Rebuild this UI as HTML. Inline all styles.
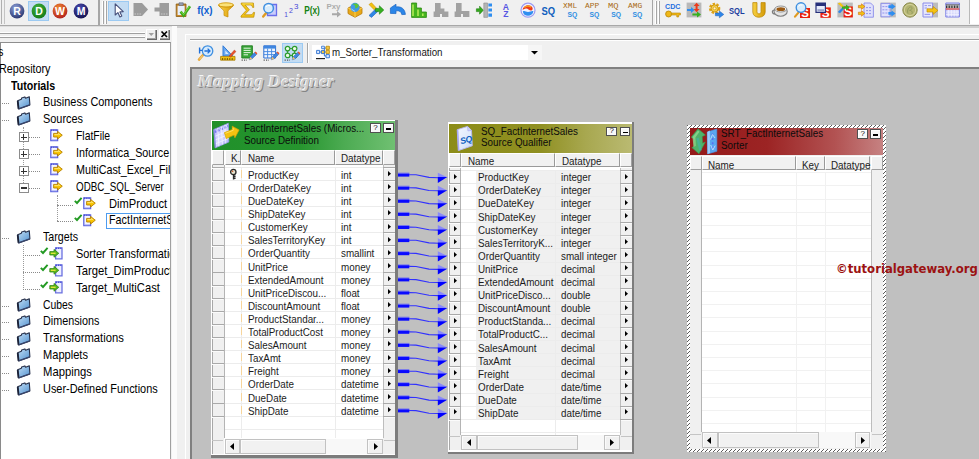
<!DOCTYPE html>
<html><head><meta charset="utf-8"><title>Mapping Designer</title><style>
html,body{margin:0;padding:0}
body{width:979px;height:459px;overflow:hidden;background:#f0f0f0;position:relative;font-family:"Liberation Sans",sans-serif;font-size:12px;color:#000}
.a{position:absolute}
.t{position:absolute;white-space:nowrap;line-height:1}
.tree{font-size:12.8px;color:#000}
.tb{font-size:11px;color:#1a1a1a}
svg{position:absolute;overflow:visible}
</style></head><body>
<div class="a" style="left:0px;top:0px;width:970px;height:24px;background:#f0f0f0;"></div>
<div class="a" style="left:970px;top:0px;width:9px;height:24px;background:#ffffff;"></div>
<div class="a" style="left:969px;top:0px;width:1px;height:24px;background:#b9b9b9;"></div>
<div class="a" style="left:0px;top:24.6px;width:979px;height:1.2px;background:#a8a8a8;"></div>
<div class="a" style="left:0px;top:25.8px;width:979px;height:1.2px;background:#dedede;"></div>
<div class="a" style="left:0px;top:27px;width:172px;height:432px;background:#f0f0f0;"></div>
<div class="a" style="left:0px;top:32.4px;width:145px;height:1px;background:#ffffff;"></div>
<div class="a" style="left:0px;top:33.4px;width:145px;height:1px;background:#a0a0a0;"></div>
<div class="a" style="left:0px;top:36.3px;width:145px;height:1px;background:#ffffff;"></div>
<div class="a" style="left:0px;top:37.3px;width:145px;height:1px;background:#a0a0a0;"></div>
<div class="a" style="left:146px;top:29px;width:11px;height:11px;background:#f0f0f0;box-shadow:inset 1px 1px 0 #fff, inset -1px -1px 0 #696969, inset -2px -2px 0 #a0a0a0;"></div>
<div class="a" style="left:159px;top:29px;width:11px;height:11px;background:#f0f0f0;box-shadow:inset 1px 1px 0 #fff, inset -1px -1px 0 #696969, inset -2px -2px 0 #a0a0a0;"></div>
<svg style="left:146px;top:29px" width="11" height="11"><path d="M2.5 4 L8 4 L5.25 7 Z" fill="#a0a0a0"/></svg>
<svg style="left:159px;top:29px" width="11" height="11"><path d="M2.5 2.5 L8 8 M8 2.5 L2.5 8" stroke="#000" stroke-width="1.7"/></svg>
<div class="a" style="left:0px;top:42.3px;width:171px;height:417px;background:#ffffff;border-top:1.5px solid #8e8e8e;border-right:1px solid #a0a0a0;border-left:1.2px solid #8a8a8a;box-sizing:border-box;"></div>
<div class="a" style="left:172px;top:26.3px;width:5.4px;height:433px;background:#fbfbfb;"></div>
<div class="a" style="left:177.4px;top:25.8px;width:802px;height:1.8px;background:#cecece;"></div>
<div class="a" style="left:177.4px;top:27.8px;width:802px;height:432px;background:#f0f0f0;"></div>
<div class="a" style="left:185px;top:34.2px;width:794px;height:0.9px;background:#ffffff;"></div>
<div class="a" style="left:184.9px;top:34.2px;width:0.8px;height:425px;background:#ffffff;"></div>
<div class="a" style="left:189.6px;top:38.8px;width:790px;height:1px;background:#a0a0a0;"></div>
<div class="a" style="left:189.6px;top:39.8px;width:790px;height:1px;background:#ffffff;"></div>
<div class="a" style="left:189.7px;top:66.8px;width:790px;height:393px;background:#c0c0c0;border-top:2.1px solid #808080;border-left:2.1px solid #808080;box-sizing:border-box;"></div>
<div class="a" style="left:1px;top:0px;width:1px;height:24px;background:#b0b0b0;"></div>
<div class="a" style="left:4px;top:0px;width:1px;height:24px;background:#c4c4c4;"></div>
<div class="a" style="left:28.2px;top:0.7px;width:21.2px;height:20px;background:#c3dcf3;box-sizing:border-box;border:1px solid #9ccaf2;"></div>
<svg style="left:8.5px;top:2.7px" width="16" height="16" viewBox="0 0 16 16"><defs><radialGradient id="bR" cx="0.4" cy="0.3" r="0.75"><stop offset="0" stop-color="#8ea0d8"/><stop offset="1" stop-color="#27346e"/></radialGradient></defs><circle cx="8" cy="8" r="7.4" fill="url(#bR)"/><text x="8" y="11.7" text-anchor="middle" font-family="Liberation Sans, sans-serif" font-weight="bold" font-size="10.5" fill="#fff">R</text></svg>
<svg style="left:30.6px;top:2.9px" width="16" height="16" viewBox="0 0 16 16"><defs><radialGradient id="bD" cx="0.4" cy="0.3" r="0.75"><stop offset="0" stop-color="#3fae3f"/><stop offset="1" stop-color="#157a15"/></radialGradient></defs><circle cx="8" cy="8" r="7.4" fill="url(#bD)"/><text x="8" y="11.7" text-anchor="middle" font-family="Liberation Sans, sans-serif" font-weight="bold" font-size="10.5" fill="#fff">D</text></svg>
<svg style="left:51.8px;top:2.7px" width="16" height="16" viewBox="0 0 16 16"><defs><radialGradient id="bW" cx="0.4" cy="0.3" r="0.75"><stop offset="0" stop-color="#f08a30"/><stop offset="1" stop-color="#b01c1c"/></radialGradient></defs><circle cx="8" cy="8" r="7.4" fill="url(#bW)"/><text x="8" y="11.7" text-anchor="middle" font-family="Liberation Sans, sans-serif" font-weight="bold" font-size="10.5" fill="#fff">W</text></svg>
<svg style="left:73.3px;top:2.7px" width="16" height="16" viewBox="0 0 16 16"><defs><radialGradient id="bM" cx="0.4" cy="0.3" r="0.75"><stop offset="0" stop-color="#4a4ab0"/><stop offset="1" stop-color="#12124e"/></radialGradient></defs><circle cx="8" cy="8" r="7.4" fill="url(#bM)"/><text x="8" y="11.7" text-anchor="middle" font-family="Liberation Sans, sans-serif" font-weight="bold" font-size="10.5" fill="#fff">M</text></svg>
<div class="a" style="left:98.4px;top:0px;width:1.2px;height:24.5px;background:#a6a6a6;"></div>
<div class="a" style="left:101.7px;top:1px;width:1px;height:22.5px;background:#ffffff;"></div>
<div class="a" style="left:102.7px;top:1px;width:1px;height:22.5px;background:#a6a6a6;"></div>
<div class="a" style="left:105.3px;top:1px;width:1px;height:22.5px;background:#ffffff;"></div>
<div class="a" style="left:106.3px;top:1px;width:1px;height:22.5px;background:#a6a6a6;"></div>
<div class="a" style="left:108.3px;top:0.7px;width:21.2px;height:20px;background:#c3dcf3;box-sizing:border-box;border:1px solid #9ccaf2;"></div>
<svg style="left:111px;top:2.4px" width="16" height="16" viewBox="0 0 16 16"><path d="M4.2 1.8 L4.2 13 L6.9 10.6 L8.9 14.9 L10.8 14 L8.9 9.9 L12.3 9.6 Z" fill="#fff" stroke="#47507a" stroke-width="1.1" stroke-linejoin="round"/></svg>
<svg style="left:133.45px;top:2.4px" width="16" height="16" viewBox="0 0 16 16"><path d="M0.5 1 H9 L15 7.5 L9 14 H0.5 Z" fill="#9c9c9c"/><path d="M1.5 12 H8" stroke="#c8c8c8" stroke-width="1" stroke-dasharray="1.5 1"/></svg>
<svg style="left:153.9px;top:2.4px" width="16" height="16" viewBox="0 0 16 16"><path d="M5.5 1 H15 V14 H5.5 V9.5 H0.5 V5.5 H5.5 Z" fill="#9c9c9c"/><path d="M7 12 H14" stroke="#c8c8c8" stroke-width="1" stroke-dasharray="1.5 1"/></svg>
<svg style="left:175.35px;top:2.4px" width="16" height="16" viewBox="0 0 16 16"><path d="M1.2 2 H11 V14.5 H1.2 Z" fill="#c88a2a" stroke="#8a5a10" stroke-width="0.8"/><path d="M2.6 3.8 H9.6 V13 H2.6 Z" fill="#e6eefc"/><path d="M4 0.8 H8.2 V3.4 H4 Z" fill="#9aa0b4" stroke="#5a6074" stroke-width="0.6"/><path d="M5.6 9.6 L8.6 13.6 L15 4.2" fill="none" stroke="#3caa1c" stroke-width="2.6"/><path d="M6 9.4 L8.6 12.6 L14.4 4.4" fill="none" stroke="#8fe04a" stroke-width="0.8"/></svg>
<svg style="left:196.8px;top:2.4px" width="16" height="16" viewBox="0 0 16 16"><text x="0.2" y="12" font-family="Liberation Sans, sans-serif" font-weight="bold" font-size="11.5" fill="#0f5fd0" textLength="15.4" lengthAdjust="spacingAndGlyphs">f(x)</text></svg>
<svg style="left:218.25px;top:2.4px" width="16" height="16" viewBox="0 0 16 16"><defs><linearGradient id="fun" x1="0" x2="1"><stop offset="0" stop-color="#f9d24a"/><stop offset="1" stop-color="#d89a06"/></linearGradient></defs><ellipse cx="8" cy="3" rx="7.6" ry="2.2" fill="#fbe27a" stroke="#d49a08" stroke-width="0.9"/><path d="M0.6 3.6 C3 6.5 6 8 6 9.5 V13.5 L10 15 V9.5 C10 8 13 6.5 15.4 3.6 C12 5.6 4 5.6 0.6 3.6 Z" fill="url(#fun)" stroke="#c88c04" stroke-width="0.7"/></svg>
<svg style="left:239.7px;top:2.4px" width="16" height="16" viewBox="0 0 16 16"><path d="M1.2 1 H13.4 L13.8 5.4 H12.6 C12.2 3.6 11.2 3 9.4 3 H5.2 L9.4 7.8 L4.6 12.8 H10 C12 12.8 12.8 12 13.4 10.4 H14.6 L13.8 15.2 H1 V14 L6.4 8.2 L1.2 2.2 Z" fill="#f2c418" stroke="#b88a04" stroke-width="0.7" stroke-linejoin="round"/><path d="M2.4 1.9 H12.6" stroke="#fdea70" stroke-width="0.8"/></svg>
<svg style="left:261.15px;top:2.4px" width="16" height="16" viewBox="0 0 16 16"><path d="M6.5 2.5 H15.5 V13.5 H6.5 Z" fill="#c9cdfb" stroke="#6a6eea" stroke-width="1.3"/><path d="M2.2 14.6 L5.6 10.4" stroke="#e09a20" stroke-width="2.4" stroke-linecap="round"/><circle cx="7.6" cy="6.2" r="4.8" fill="#d8ecfc" stroke="#3f8fe0" stroke-width="1.5"/><path d="M5.2 5 A3 3 0 0 1 9 3.6" stroke="#fff" stroke-width="1" fill="none"/></svg>
<svg style="left:282.6px;top:2.4px" width="16" height="16" viewBox="0 0 16 16"><text x="1.2" y="14.6" font-family="Liberation Sans, sans-serif" font-size="6.5" fill="#4848d8">1</text><text x="6" y="10.6" font-family="Liberation Sans, sans-serif" font-size="7" fill="#4848d8">2</text><text x="11" y="7" font-family="Liberation Sans, sans-serif" font-size="8" fill="#4848d8">3</text></svg>
<svg style="left:304.05px;top:2.4px" width="16" height="16" viewBox="0 0 16 16"><text x="0.2" y="12.4" font-family="Liberation Sans, sans-serif" font-weight="bold" font-size="11" fill="#138213" textLength="15.6" lengthAdjust="spacingAndGlyphs">P(x)</text></svg>
<svg style="left:325.5px;top:2.4px" width="16" height="16" viewBox="0 0 16 16"><text x="0.4" y="7.2" font-family="Liberation Sans, sans-serif" font-weight="bold" font-size="8" fill="#acacac" textLength="14" lengthAdjust="spacingAndGlyphs">Pxy</text><path d="M6 11.3 H11 V9 L15 12.3 L11 15.6 V13.3 H6 Z" fill="#a8a8a8"/></svg>
<svg style="left:346.95px;top:2.4px" width="16" height="16" viewBox="0 0 16 16"><path d="M1 6 L8 2.5 L15 6 V11.5 L8 15.3 L1 11.5 Z" fill="#e8a91a" stroke="#b87806" stroke-width="0.8"/><path d="M1 6 L8 9.6 L15 6 M8 9.6 V15.3" stroke="#fbd65a" stroke-width="0.9" fill="none"/><circle cx="8" cy="5.4" r="4.6" fill="#3f9ae8"/><path d="M5.5 3 C8 2 9 5 7.6 6.6 C9.5 6.4 11.5 5 11.8 3.4 C10.5 1.2 7 0.8 5.5 3 Z" fill="#5cc43a"/><path d="M4 6.5 C5 8 7 8.5 8 9.4" stroke="#bfe2ff" stroke-width="0.8" fill="none"/></svg>
<svg style="left:368.4px;top:2.4px" width="16" height="16" viewBox="0 0 16 16"><path d="M1 2.5 L3.5 0.8 L9.5 7.2 L7.4 9 Z" fill="#f2c312" stroke="#c99404" stroke-width="0.6"/><path d="M1 13.5 L3.5 15.4 L9.8 9.4 L7.4 7.2 Z" fill="#2f86e6" stroke="#1d62b8" stroke-width="0.6"/><path d="M7.5 6.4 H11.4 V3.8 L15.8 8 L11.4 12.2 V9.6 H7.5 Z" fill="#36b020" stroke="#1f7e10" stroke-width="0.6"/></svg>
<svg style="left:389.85px;top:2.4px" width="16" height="16" viewBox="0 0 16 16"><path d="M0.4 6 L6 2.2 V5 C11 4 15 7 15.4 12.4 L11.8 12.6 C11.4 9.5 9 8.4 6 8.8 V11.6 L0.4 11.4 Z" fill="#2b86e8" stroke="#1c66c2" stroke-width="0.7" stroke-linejoin="round"/></svg>
<svg style="left:411.3px;top:2.4px" width="16" height="16" viewBox="0 0 16 16"><path d="M0.6 1 H5.6 V6 H10.4 V10 H15.4 V15.4 H0.6 Z" fill="#45b41f" stroke="#2b8a10" stroke-width="0.8"/><path d="M2 2.4 V14 M7 7.4 V14 M11.8 11.4 V14" stroke="#b6ec5a" stroke-width="1.5"/></svg>
<svg style="left:432.75px;top:2.4px" width="16" height="16" viewBox="0 0 16 16"><path d="M2 1 H7.6 V6.6 H11.4 V9.6 H15.4 V15 H9 V12 H7 V15 H0.6 V9.6 H2 Z" fill="#a2a2a2"/></svg>
<svg style="left:454.2px;top:2.4px" width="16" height="16" viewBox="0 0 16 16"><path d="M2 1 H7.6 V9 H15.4 V15 H9 V12 H7 V15 H0.6 V9.6 H2 Z" fill="#a2a2a2"/></svg>
<svg style="left:475.65px;top:2.4px" width="16" height="16" viewBox="0 0 16 16"><path d="M0.4 6.8 H3.6 V4.2 L7.4 8.2 L3.6 12.2 V9.6 H0.4 Z" fill="#34aa1c" stroke="#1f7e10" stroke-width="0.6"/><path d="M7.8 1 H11.6 V15.4 H7.8 Z" fill="#b4b4b4" stroke="#8c8c8c" stroke-width="0.6"/><path d="M12.4 1.4 H16 V4.6 H12.4 Z M12.4 6.4 H16 V9.6 H12.4 Z M12.4 11.6 H16 V14.8 H12.4 Z" fill="#2f8ef0"/></svg>
<svg style="left:497.1px;top:2.4px" width="16" height="16" viewBox="0 0 16 16"><text x="8.8" y="7.6" text-anchor="middle" font-family="Liberation Sans, sans-serif" font-weight="bold" font-size="8.6" fill="#5656e2">A</text><text x="8.8" y="15.4" text-anchor="middle" font-family="Liberation Sans, sans-serif" font-weight="bold" font-size="8.6" fill="#5656e2">Z</text></svg>
<svg style="left:519.55px;top:2.4px" width="16" height="16" viewBox="0 0 16 16"><circle cx="8" cy="8.2" r="7" fill="#f2f4ff" stroke="#9a9af2" stroke-width="1.2"/><path d="M2.6 8 C3 3.6 8.6 2 11.6 4.4 C13.4 6 12.8 8.6 10.6 8.6 C8.4 8.4 8.2 6.4 6 6.6 C4.4 6.8 3.4 7.6 2.6 8 Z" fill="#ee3a1a"/><path d="M4.4 5.6 C6 3.8 9.6 3.6 11 5.2" stroke="#f7a21c" stroke-width="1.4" fill="none"/><path d="M2.8 9.4 C4.6 8.2 6 10 8 10 C10 10 11.6 8.8 13.4 9.2 C13 12 10.8 13.8 8 13.8 C5.2 13.8 3.2 12 2.8 9.4 Z" fill="#2f8ef0"/></svg>
<svg style="left:541px;top:2.4px" width="16" height="16" viewBox="0 0 16 16"><text x="0.6" y="13" font-family="Liberation Sans, sans-serif" font-weight="bold" font-size="11.5" fill="#0f5fbe" textLength="13.6" lengthAdjust="spacingAndGlyphs">SQ</text></svg>
<svg style="left:563.45px;top:2.4px" width="16" height="16" viewBox="0 0 16 16"><text x="0" y="6.4" font-family="Liberation Mono, monospace" font-size="6.6" fill="#a86a14" textLength="14.2" lengthAdjust="spacingAndGlyphs">XML</text><text x="4.6" y="14.6" font-family="Liberation Sans, sans-serif" font-weight="bold" font-size="7.6" fill="#2f8fe2" textLength="9.8" lengthAdjust="spacingAndGlyphs">SQ</text></svg>
<svg style="left:584.9px;top:2.4px" width="16" height="16" viewBox="0 0 16 16"><text x="0" y="6.4" font-family="Liberation Mono, monospace" font-size="6.6" fill="#a86a14" textLength="14.2" lengthAdjust="spacingAndGlyphs">APP</text><text x="4.6" y="14.6" font-family="Liberation Sans, sans-serif" font-weight="bold" font-size="7.6" fill="#2f8fe2" textLength="9.8" lengthAdjust="spacingAndGlyphs">SQ</text></svg>
<svg style="left:608.35px;top:2.4px" width="16" height="16" viewBox="0 0 16 16"><text x="0" y="6.4" font-family="Liberation Mono, monospace" font-size="6.6" fill="#a86a14" textLength="10.6" lengthAdjust="spacingAndGlyphs">MQ</text><text x="3.2" y="14.6" font-family="Liberation Sans, sans-serif" font-weight="bold" font-size="7.6" fill="#2f8fe2" textLength="9.8" lengthAdjust="spacingAndGlyphs">SQ</text></svg>
<svg style="left:627.8px;top:2.4px" width="16" height="16" viewBox="0 0 16 16"><text x="0" y="6.4" font-family="Liberation Mono, monospace" font-size="6.6" fill="#a86a14" textLength="14.2" lengthAdjust="spacingAndGlyphs">AMG</text><text x="4.6" y="14.6" font-family="Liberation Sans, sans-serif" font-weight="bold" font-size="7.6" fill="#2f8fe2" textLength="9.8" lengthAdjust="spacingAndGlyphs">SQ</text></svg>
<div class="a" style="left:651.8px;top:0px;width:1.2px;height:24.5px;background:#a6a6a6;"></div>
<div class="a" style="left:654.6px;top:1px;width:1px;height:22.5px;background:#ffffff;"></div>
<div class="a" style="left:655.6px;top:1px;width:1px;height:22.5px;background:#a6a6a6;"></div>
<div class="a" style="left:658.2px;top:1px;width:1px;height:22.5px;background:#ffffff;"></div>
<div class="a" style="left:659.2px;top:1px;width:1px;height:22.5px;background:#a6a6a6;"></div>
<svg style="left:665px;top:2.4px" width="16" height="16" viewBox="0 0 16 16"><text x="0" y="6.8" font-family="Liberation Sans, sans-serif" font-weight="bold" font-size="8" fill="#1f6fe0" textLength="15.4" lengthAdjust="spacingAndGlyphs">CDC</text><circle cx="3.6" cy="12" r="3" fill="#f0b818" stroke="#b88404" stroke-width="0.8"/><path d="M6.4 11 H15.4 V13 H13.6 V15 H11.8 V13 H6.4 Z" fill="#f0b818" stroke="#b88404" stroke-width="0.6"/></svg>
<svg style="left:686.45px;top:2.4px" width="16" height="16" viewBox="0 0 16 16"><path d="M0.6 0.6 H15.4 V15.4 H0.6 Z" fill="#b9b9b9"/><path d="M1 7 H5 V5 L8.6 8 L5 11 V9 H1 Z" fill="#2f8ef0"/><path d="M10.6 0.8 L13.6 4 H11.6 V7 H13.6 L10.6 10.2 L7.6 7 H9.6 V4 H7.6 Z" fill="#ee3a1a"/><path d="M6.4 11.4 H11 V9.6 L15 12.6 L11 15.4 V13.6 H6.4 Z" fill="#36b020"/></svg>
<svg style="left:707.9px;top:2.4px" width="16" height="16" viewBox="0 0 16 16"><circle cx="6.6" cy="6.4" r="4.2" fill="none" stroke="#e0a416" stroke-width="3" stroke-dasharray="2.2 1.3"/><circle cx="6.6" cy="6.4" r="3.6" fill="#f6cf4a" stroke="#c48c08" stroke-width="0.8"/><circle cx="6.6" cy="6.4" r="1.4" fill="#fff6d0" stroke="#c48c08" stroke-width="0.6"/><path d="M7.4 11 H11.4 V9 L15.8 12.4 L11.4 15.8 V13.8 H7.4 Z" fill="#2f86e8" stroke="#1a5cb6" stroke-width="0.5"/></svg>
<svg style="left:729.35px;top:2.4px" width="16" height="16" viewBox="0 0 16 16"><text x="0" y="11.8" font-family="Liberation Sans, sans-serif" font-weight="bold" font-size="8.6" fill="#1b3d9e" textLength="15.6" lengthAdjust="spacingAndGlyphs">SQL</text></svg>
<svg style="left:751.8px;top:2.4px" width="16" height="16" viewBox="0 0 16 16"><defs><linearGradient id="ug" x1="0" x2="1"><stop offset="0" stop-color="#f7d040"/><stop offset="1" stop-color="#d49a08"/></linearGradient></defs><path d="M0.8 0.6 H5 V9.6 C5 12.6 9 12.6 9 9.6 V0.6 H13.2 V10 C13.2 17 0.8 17 0.8 10 Z" fill="url(#ug)" stroke="#b88404" stroke-width="0.7"/></svg>
<svg style="left:772.25px;top:2.4px" width="16" height="16" viewBox="0 0 16 16"><ellipse cx="8.6" cy="9.4" rx="6.6" ry="4.8" fill="#e4e4e4" stroke="#7e7e7e" stroke-width="1.1"/><ellipse cx="8.8" cy="7" rx="6" ry="3" fill="#f8f8f8" stroke="#8a8a8a" stroke-width="0.9"/><ellipse cx="8.8" cy="7.2" rx="4.4" ry="1.9" fill="#9a5a14"/><path d="M2.4 8 C-0.4 8 -0.4 12 3 12" fill="none" stroke="#7e7e7e" stroke-width="1.2"/></svg>
<svg style="left:793.7px;top:2.4px" width="16" height="16" viewBox="0 0 16 16"><path d="M6 6 H16 V16 H6 Z" fill="#e8200e"/><text x="11.0" y="14.9" text-anchor="middle" font-family="Liberation Sans, sans-serif" font-weight="bold" font-size="11.4" fill="#fff">S</text><path d="M1 14.6 L4.4 10.6" stroke="#e09a20" stroke-width="2.2" stroke-linecap="round"/><circle cx="7" cy="5.6" r="4.8" fill="#d8ecfc" stroke="#3f8fe0" stroke-width="1.4"/><path d="M4.6 4.6 A3 3 0 0 1 8.4 3" stroke="#fff" stroke-width="1" fill="none"/></svg>
<svg style="left:815.15px;top:2.4px" width="16" height="16" viewBox="0 0 16 16"><path d="M5.4 5.4 H15.8 V15.8 H5.4 Z" fill="#e8200e"/><text x="10.600000000000001" y="14.700000000000001" text-anchor="middle" font-family="Liberation Sans, sans-serif" font-weight="bold" font-size="11.8" fill="#fff">S</text><path d="M1 1 H10.4 V10.4 H1 Z" fill="#e6ebfa" stroke="#27307a" stroke-width="1.2"/><path d="M1 1 H10.4 V4 H1 Z" fill="#27307a"/><path d="M2.4 7.2 H9 V9.4 H2.4 Z" fill="#9aa2c8"/></svg>
<svg style="left:836.6px;top:2.4px" width="16" height="16" viewBox="0 0 16 16"><path d="M0.4 0.6 H15.8 V15.4 H0.4 Z" fill="#bcbcbc"/><path d="M6.6 4.4 H15.799999999999999 V15.4 H6.6 Z" fill="#e8200e"/><text x="11.2" y="14.3" text-anchor="middle" font-family="Liberation Sans, sans-serif" font-weight="bold" font-size="12.4" fill="#fff">S</text><path d="M0.8 1.6 L3 0.6 L7 4.2 L5.4 5.8 Z" fill="#f2c312"/><path d="M0.8 10 L3 11.2 L7 7 L5.4 5.4 Z" fill="#2f86e6"/><path d="M5 4.4 H9 V2.4 L12.8 5.6 L9 8.8 V6.8 H5 Z" fill="#36b020"/></svg>
<svg style="left:858.05px;top:2.4px" width="16" height="16" viewBox="0 0 16 16"><path d="M6 1 H12.6 L15.4 3.8 V15.2 H6 Z" fill="#dfe0fc" stroke="#8a8cea" stroke-width="0.9"/><path d="M8 5.6 H13.4 M8 8.6 H13.4 M8 11.6 H13.4" stroke="#8a8cea" stroke-width="0.9" stroke-dasharray="2 1"/><path d="M0.4 3.4 H3.4 V1.8 L7 4.6 L3.4 7.4 V5.8 H0.4 Z M0.4 10.2 H3.4 V8.6 L7 11.4 L3.4 14.2 V12.6 H0.4 Z" fill="#f2c312" stroke="#d06a10" stroke-width="0.6"/></svg>
<svg style="left:879.5px;top:2.4px" width="16" height="16" viewBox="0 0 16 16"><path d="M0.4 0.6 H15.8 V15.4 H0.4 Z" fill="#bcbcbc"/><path d="M1 1.4 H10 V14.8 H1 Z" fill="#dfe0fc" stroke="#8a8cea" stroke-width="0.9"/><path d="M2.4 4.6 H8.6 M2.4 7.8 H8.6 M2.4 11 H8.6" stroke="#8a8cea" stroke-width="0.9" stroke-dasharray="2 1"/><path d="M8.4 3.2 H11.4 V1.4 L15.6 4.6 L11.4 7.8 V6 H8.4 Z M8.4 10 H11.4 V8.2 L15.6 11.4 L11.4 14.6 V12.8 H8.4 Z" fill="#2f8ef0"/></svg>
<svg style="left:901.95px;top:2.4px" width="16" height="16" viewBox="0 0 16 16"><circle cx="8" cy="8" r="7.2" fill="#b4b472" stroke="#8c8c50" stroke-width="1"/><circle cx="8" cy="8" r="5.6" fill="none" stroke="#d6d6a0" stroke-width="0.9"/><path d="M6 11.6 C4.6 8 7 4.4 9.4 5 C11 5.6 9.6 8 7.6 8.4 C10 8.4 11 10.4 9.6 12" fill="none" stroke="#8e9a5c" stroke-width="0.9"/></svg>
<svg style="left:922.4px;top:2.4px" width="16" height="16" viewBox="0 0 16 16"><path d="M10 0.6 H16 V15.4 H10 Z" fill="#bcbcbc"/><path d="M1 1 H10.6 V15 H1 Z" fill="#e6e7fd" stroke="#8a8cea" stroke-width="1"/><path d="M2.6 3.6 H5 M6 3.6 H9 M2.6 6 H5 M2.6 12.4 H8" stroke="#8a8cea" stroke-width="0.9"/><path d="M5 6.8 H11 V4.4 L16 8.4 L11 12.4 V10 H5 Z" fill="#f5c211" stroke="#c28c04" stroke-width="0.7"/></svg>
<svg style="left:944.85px;top:2.4px" width="16" height="16" viewBox="0 0 16 16"><path d="M0.8 1 H14.4 V15 H0.8 Z" fill="#d4d6fb" stroke="#7c80e4" stroke-width="1"/><path d="M0.8 3 H14.4 V6.4 H0.8 Z" fill="#e8e8e8"/><path d="M1 4.7 H14.2" stroke="#222" stroke-width="2.6" stroke-dasharray="0.9 0.7"/><path d="M0.8 2.8 H14.4" stroke="#444" stroke-width="0.8"/><path d="M0.8 7 H14.4" stroke="#d8281c" stroke-width="1.1"/><path d="M3.6 8 V14.6 M6.4 8 V14.6 M9.2 8 V14.6 M12 8 V14.6 M1 10 H14 M1 12.4 H14" stroke="#f2f3ff" stroke-width="0.8"/></svg>
<div class="a" style="left:0;top:44px;width:170px;height:415px;overflow:hidden"><div class="a" style="left:0;top:-44px;width:300px;height:459px"><div class="t tree" style="left:-2.5px;top:45.8px;transform:scaleX(0.84);transform-origin:0 0;">s</div>
<div class="t tree" style="left:-1px;top:62.6px;transform:scaleX(0.842);transform-origin:0 0;">Repository</div>
<div class="t tree" style="left:10.5px;top:79.5px;font-weight:bold;transform:scaleX(0.832);transform-origin:0 0;">Tutorials</div>
<div class="a" style="left:0px;top:103.4px;width:9px;height:0;border-top:1px dotted #8a8a8a"></div>
<svg style="left:16px;top:95.6px" width="15" height="14" viewBox="0 0 15 14"><defs><linearGradient id="fg3" x1="0" y1="0" x2="1" y2="1"><stop offset="0" stop-color="#c4e0f6"/><stop offset="1" stop-color="#4f8fce"/></linearGradient></defs><path d="M1.6 4.8 L5.4 3.2 L5.6 1.9 L8.8 0.9 L9.6 2.2 L13.3 0.7 L13.9 8.9 L2.5 13 Z" fill="url(#fg3)" stroke="#27304a" stroke-width="1.1" stroke-linejoin="round"/><path d="M1.7 4.8 L2.6 12.8" stroke="#1b2238" stroke-width="1.8"/><path d="M2.7 12.9 L13.8 8.9" stroke="#39456a" stroke-width="1.3"/></svg>
<div class="t tree" style="left:43px;top:96.4px;transform:scaleX(0.854);transform-origin:0 0;">Business Components</div>
<div class="a" style="left:0px;top:120.2px;width:9px;height:0;border-top:1px dotted #8a8a8a"></div>
<svg style="left:16px;top:112.4px" width="15" height="14" viewBox="0 0 15 14"><defs><linearGradient id="fg4" x1="0" y1="0" x2="1" y2="1"><stop offset="0" stop-color="#c4e0f6"/><stop offset="1" stop-color="#4f8fce"/></linearGradient></defs><path d="M1.6 4.8 L5.4 3.2 L5.6 1.9 L8.8 0.9 L9.6 2.2 L13.3 0.7 L13.9 8.9 L2.5 13 Z" fill="url(#fg4)" stroke="#27304a" stroke-width="1.1" stroke-linejoin="round"/><path d="M1.7 4.8 L2.6 12.8" stroke="#1b2238" stroke-width="1.8"/><path d="M2.7 12.9 L13.8 8.9" stroke="#39456a" stroke-width="1.3"/></svg>
<div class="t tree" style="left:43px;top:113.2px;transform:scaleX(0.852);transform-origin:0 0;">Sources</div>
<div class="a" style="left:0px;top:238.2px;width:9px;height:0;border-top:1px dotted #8a8a8a"></div>
<svg style="left:16px;top:230.4px" width="15" height="14" viewBox="0 0 15 14"><defs><linearGradient id="fg11" x1="0" y1="0" x2="1" y2="1"><stop offset="0" stop-color="#c4e0f6"/><stop offset="1" stop-color="#4f8fce"/></linearGradient></defs><path d="M1.6 4.8 L5.4 3.2 L5.6 1.9 L8.8 0.9 L9.6 2.2 L13.3 0.7 L13.9 8.9 L2.5 13 Z" fill="url(#fg11)" stroke="#27304a" stroke-width="1.1" stroke-linejoin="round"/><path d="M1.7 4.8 L2.6 12.8" stroke="#1b2238" stroke-width="1.8"/><path d="M2.7 12.9 L13.8 8.9" stroke="#39456a" stroke-width="1.3"/></svg>
<div class="t tree" style="left:43px;top:231.2px;transform:scaleX(0.834);transform-origin:0 0;">Targets</div>
<div class="a" style="left:0px;top:305.6px;width:9px;height:0;border-top:1px dotted #8a8a8a"></div>
<svg style="left:16px;top:297.8px" width="15" height="14" viewBox="0 0 15 14"><defs><linearGradient id="fg15" x1="0" y1="0" x2="1" y2="1"><stop offset="0" stop-color="#c4e0f6"/><stop offset="1" stop-color="#4f8fce"/></linearGradient></defs><path d="M1.6 4.8 L5.4 3.2 L5.6 1.9 L8.8 0.9 L9.6 2.2 L13.3 0.7 L13.9 8.9 L2.5 13 Z" fill="url(#fg15)" stroke="#27304a" stroke-width="1.1" stroke-linejoin="round"/><path d="M1.7 4.8 L2.6 12.8" stroke="#1b2238" stroke-width="1.8"/><path d="M2.7 12.9 L13.8 8.9" stroke="#39456a" stroke-width="1.3"/></svg>
<div class="t tree" style="left:43px;top:298.6px;transform:scaleX(0.811);transform-origin:0 0;">Cubes</div>
<div class="a" style="left:0px;top:322.4px;width:9px;height:0;border-top:1px dotted #8a8a8a"></div>
<svg style="left:16px;top:314.6px" width="15" height="14" viewBox="0 0 15 14"><defs><linearGradient id="fg16" x1="0" y1="0" x2="1" y2="1"><stop offset="0" stop-color="#c4e0f6"/><stop offset="1" stop-color="#4f8fce"/></linearGradient></defs><path d="M1.6 4.8 L5.4 3.2 L5.6 1.9 L8.8 0.9 L9.6 2.2 L13.3 0.7 L13.9 8.9 L2.5 13 Z" fill="url(#fg16)" stroke="#27304a" stroke-width="1.1" stroke-linejoin="round"/><path d="M1.7 4.8 L2.6 12.8" stroke="#1b2238" stroke-width="1.8"/><path d="M2.7 12.9 L13.8 8.9" stroke="#39456a" stroke-width="1.3"/></svg>
<div class="t tree" style="left:43px;top:315.4px;transform:scaleX(0.843);transform-origin:0 0;">Dimensions</div>
<div class="a" style="left:0px;top:339.3px;width:9px;height:0;border-top:1px dotted #8a8a8a"></div>
<svg style="left:16px;top:331.5px" width="15" height="14" viewBox="0 0 15 14"><defs><linearGradient id="fg17" x1="0" y1="0" x2="1" y2="1"><stop offset="0" stop-color="#c4e0f6"/><stop offset="1" stop-color="#4f8fce"/></linearGradient></defs><path d="M1.6 4.8 L5.4 3.2 L5.6 1.9 L8.8 0.9 L9.6 2.2 L13.3 0.7 L13.9 8.9 L2.5 13 Z" fill="url(#fg17)" stroke="#27304a" stroke-width="1.1" stroke-linejoin="round"/><path d="M1.7 4.8 L2.6 12.8" stroke="#1b2238" stroke-width="1.8"/><path d="M2.7 12.9 L13.8 8.9" stroke="#39456a" stroke-width="1.3"/></svg>
<div class="t tree" style="left:43px;top:332.3px;transform:scaleX(0.878);transform-origin:0 0;">Transformations</div>
<div class="a" style="left:0px;top:356.1px;width:9px;height:0;border-top:1px dotted #8a8a8a"></div>
<svg style="left:16px;top:348.3px" width="15" height="14" viewBox="0 0 15 14"><defs><linearGradient id="fg18" x1="0" y1="0" x2="1" y2="1"><stop offset="0" stop-color="#c4e0f6"/><stop offset="1" stop-color="#4f8fce"/></linearGradient></defs><path d="M1.6 4.8 L5.4 3.2 L5.6 1.9 L8.8 0.9 L9.6 2.2 L13.3 0.7 L13.9 8.9 L2.5 13 Z" fill="url(#fg18)" stroke="#27304a" stroke-width="1.1" stroke-linejoin="round"/><path d="M1.7 4.8 L2.6 12.8" stroke="#1b2238" stroke-width="1.8"/><path d="M2.7 12.9 L13.8 8.9" stroke="#39456a" stroke-width="1.3"/></svg>
<div class="t tree" style="left:43px;top:349.1px;transform:scaleX(0.865);transform-origin:0 0;">Mapplets</div>
<div class="a" style="left:0px;top:373.0px;width:9px;height:0;border-top:1px dotted #8a8a8a"></div>
<svg style="left:16px;top:365.2px" width="15" height="14" viewBox="0 0 15 14"><defs><linearGradient id="fg19" x1="0" y1="0" x2="1" y2="1"><stop offset="0" stop-color="#c4e0f6"/><stop offset="1" stop-color="#4f8fce"/></linearGradient></defs><path d="M1.6 4.8 L5.4 3.2 L5.6 1.9 L8.8 0.9 L9.6 2.2 L13.3 0.7 L13.9 8.9 L2.5 13 Z" fill="url(#fg19)" stroke="#27304a" stroke-width="1.1" stroke-linejoin="round"/><path d="M1.7 4.8 L2.6 12.8" stroke="#1b2238" stroke-width="1.8"/><path d="M2.7 12.9 L13.8 8.9" stroke="#39456a" stroke-width="1.3"/></svg>
<div class="t tree" style="left:43px;top:366.0px;transform:scaleX(0.881);transform-origin:0 0;">Mappings</div>
<div class="a" style="left:0px;top:389.8px;width:9px;height:0;border-top:1px dotted #8a8a8a"></div>
<svg style="left:16px;top:382.0px" width="15" height="14" viewBox="0 0 15 14"><defs><linearGradient id="fg20" x1="0" y1="0" x2="1" y2="1"><stop offset="0" stop-color="#c4e0f6"/><stop offset="1" stop-color="#4f8fce"/></linearGradient></defs><path d="M1.6 4.8 L5.4 3.2 L5.6 1.9 L8.8 0.9 L9.6 2.2 L13.3 0.7 L13.9 8.9 L2.5 13 Z" fill="url(#fg20)" stroke="#27304a" stroke-width="1.1" stroke-linejoin="round"/><path d="M1.7 4.8 L2.6 12.8" stroke="#1b2238" stroke-width="1.8"/><path d="M2.7 12.9 L13.8 8.9" stroke="#39456a" stroke-width="1.3"/></svg>
<div class="t tree" style="left:43px;top:382.8px;transform:scaleX(0.853);transform-origin:0 0;">User-Defined Functions</div>
<div class="a" style="left:23px;top:127.4px;width:0;height:55.4px;border-left:1px dotted #9a9a9a"></div>
<div class="a" style="left:28px;top:137.1px;width:12px;height:0;border-top:1px dotted #8a8a8a"></div>
<div class="a" style="left:18.5px;top:132.4px;width:10px;height:10px;box-sizing:border-box;border:1px solid #8c8c8c;background:#fff"></div>
<div class="a" style="left:20.5px;top:136.8px;width:6px;height:1.4px;background:#333"></div>
<div class="a" style="left:22.8px;top:134.4px;width:1.4px;height:6px;background:#333"></div>
<svg style="left:50px;top:129.4px" width="13" height="13" viewBox="0 0 13 13"><path d="M0.8 0.8 H7.6 V11.6 H0.8 Z" fill="#f4f5ff" stroke="#5f66e0" stroke-width="1.3"/><path d="M1 1.2 H7.4" stroke="#4a50d8" stroke-width="1.6" stroke-dasharray="1.3 0.9"/><path d="M1.5 11 H7" stroke="#8d93ee" stroke-width="1"/><path d="M3.6 4.4 H7.6 V2.4 L12.3 6.2 L7.6 10 V8 H3.6 Z" fill="#f8c400" stroke="#b98200" stroke-width="0.9" stroke-linejoin="round"/><path d="M4.4 5.6 H8.4 V4.6 L10.3 6.1" stroke="#ffe97a" stroke-width="0.9" fill="none"/></svg>
<div class="t tree" style="left:76px;top:130.1px;transform:scaleX(0.813);transform-origin:0 0;">FlatFile</div>
<div class="a" style="left:28px;top:153.9px;width:12px;height:0;border-top:1px dotted #8a8a8a"></div>
<div class="a" style="left:18.5px;top:149.3px;width:10px;height:10px;box-sizing:border-box;border:1px solid #8c8c8c;background:#fff"></div>
<div class="a" style="left:20.5px;top:153.6px;width:6px;height:1.4px;background:#333"></div>
<div class="a" style="left:22.8px;top:151.3px;width:1.4px;height:6px;background:#333"></div>
<svg style="left:50px;top:146.3px" width="13" height="13" viewBox="0 0 13 13"><path d="M0.8 0.8 H7.6 V11.6 H0.8 Z" fill="#f4f5ff" stroke="#5f66e0" stroke-width="1.3"/><path d="M1 1.2 H7.4" stroke="#4a50d8" stroke-width="1.6" stroke-dasharray="1.3 0.9"/><path d="M1.5 11 H7" stroke="#8d93ee" stroke-width="1"/><path d="M3.6 4.4 H7.6 V2.4 L12.3 6.2 L7.6 10 V8 H3.6 Z" fill="#f8c400" stroke="#b98200" stroke-width="0.9" stroke-linejoin="round"/><path d="M4.4 5.6 H8.4 V4.6 L10.3 6.1" stroke="#ffe97a" stroke-width="0.9" fill="none"/></svg>
<div class="t tree" style="left:76px;top:146.9px;transform:scaleX(0.84);transform-origin:0 0;">Informatica_Source</div>
<div class="a" style="left:28px;top:170.8px;width:12px;height:0;border-top:1px dotted #8a8a8a"></div>
<div class="a" style="left:18.5px;top:166.2px;width:10px;height:10px;box-sizing:border-box;border:1px solid #8c8c8c;background:#fff"></div>
<div class="a" style="left:20.5px;top:170.5px;width:6px;height:1.4px;background:#333"></div>
<div class="a" style="left:22.8px;top:168.2px;width:1.4px;height:6px;background:#333"></div>
<svg style="left:50px;top:163.2px" width="13" height="13" viewBox="0 0 13 13"><path d="M0.8 0.8 H7.6 V11.6 H0.8 Z" fill="#f4f5ff" stroke="#5f66e0" stroke-width="1.3"/><path d="M1 1.2 H7.4" stroke="#4a50d8" stroke-width="1.6" stroke-dasharray="1.3 0.9"/><path d="M1.5 11 H7" stroke="#8d93ee" stroke-width="1"/><path d="M3.6 4.4 H7.6 V2.4 L12.3 6.2 L7.6 10 V8 H3.6 Z" fill="#f8c400" stroke="#b98200" stroke-width="0.9" stroke-linejoin="round"/><path d="M4.4 5.6 H8.4 V4.6 L10.3 6.1" stroke="#ffe97a" stroke-width="0.9" fill="none"/></svg>
<div class="t tree" style="left:76px;top:163.8px;transform:scaleX(0.84);transform-origin:0 0;">MultiCast_Excel_File</div>
<div class="a" style="left:28px;top:187.6px;width:12px;height:0;border-top:1px dotted #8a8a8a"></div>
<div class="a" style="left:18.5px;top:183.0px;width:10px;height:10px;box-sizing:border-box;border:1px solid #8c8c8c;background:#fff"></div>
<div class="a" style="left:20.5px;top:187.3px;width:6px;height:1.4px;background:#333"></div>
<svg style="left:50px;top:180.0px" width="13" height="13" viewBox="0 0 13 13"><path d="M0.8 0.8 H7.6 V11.6 H0.8 Z" fill="#f4f5ff" stroke="#5f66e0" stroke-width="1.3"/><path d="M1 1.2 H7.4" stroke="#4a50d8" stroke-width="1.6" stroke-dasharray="1.3 0.9"/><path d="M1.5 11 H7" stroke="#8d93ee" stroke-width="1"/><path d="M3.6 4.4 H7.6 V2.4 L12.3 6.2 L7.6 10 V8 H3.6 Z" fill="#f8c400" stroke="#b98200" stroke-width="0.9" stroke-linejoin="round"/><path d="M4.4 5.6 H8.4 V4.6 L10.3 6.1" stroke="#ffe97a" stroke-width="0.9" fill="none"/></svg>
<div class="t tree" style="left:76px;top:180.6px;transform:scaleX(0.767);transform-origin:0 0;">ODBC_SQL_Server</div>
<div class="a" style="left:56.5px;top:194.8px;width:0;height:26.7px;border-left:1px dotted #9a9a9a"></div>
<div class="a" style="left:57px;top:204.5px;width:16px;height:0;border-top:1px dotted #8a8a8a"></div>
<svg style="left:73.5px;top:196.8px" width="9" height="8" viewBox="0 0 9 8"><path d="M0.8 3.8 L3 6 L7.6 0.8" fill="none" stroke="#239a23" stroke-width="1.9"/></svg>
<svg style="left:83px;top:196.8px" width="13" height="13" viewBox="0 0 13 13"><path d="M0.8 0.8 H7.6 V11.6 H0.8 Z" fill="#f4f5ff" stroke="#5f66e0" stroke-width="1.3"/><path d="M1 1.2 H7.4" stroke="#4a50d8" stroke-width="1.6" stroke-dasharray="1.3 0.9"/><path d="M1.5 11 H7" stroke="#8d93ee" stroke-width="1"/><path d="M3.6 4.4 H7.6 V2.4 L12.3 6.2 L7.6 10 V8 H3.6 Z" fill="#f8c400" stroke="#b98200" stroke-width="0.9" stroke-linejoin="round"/><path d="M4.4 5.6 H8.4 V4.6 L10.3 6.1" stroke="#ffe97a" stroke-width="0.9" fill="none"/></svg>
<div class="a" style="left:57px;top:221.3px;width:16px;height:0;border-top:1px dotted #8a8a8a"></div>
<svg style="left:73.5px;top:213.7px" width="9" height="8" viewBox="0 0 9 8"><path d="M0.8 3.8 L3 6 L7.6 0.8" fill="none" stroke="#239a23" stroke-width="1.9"/></svg>
<svg style="left:83px;top:213.7px" width="13" height="13" viewBox="0 0 13 13"><path d="M0.8 0.8 H7.6 V11.6 H0.8 Z" fill="#f4f5ff" stroke="#5f66e0" stroke-width="1.3"/><path d="M1 1.2 H7.4" stroke="#4a50d8" stroke-width="1.6" stroke-dasharray="1.3 0.9"/><path d="M1.5 11 H7" stroke="#8d93ee" stroke-width="1"/><path d="M3.6 4.4 H7.6 V2.4 L12.3 6.2 L7.6 10 V8 H3.6 Z" fill="#f8c400" stroke="#b98200" stroke-width="0.9" stroke-linejoin="round"/><path d="M4.4 5.6 H8.4 V4.6 L10.3 6.1" stroke="#ffe97a" stroke-width="0.9" fill="none"/></svg>
<div class="t tree" style="left:109px;top:197.5px;transform:scaleX(0.87);transform-origin:0 0;">DimProduct</div>
<div class="a" style="left:106px;top:212.5px;width:70px;height:16px;box-sizing:border-box;border:1px solid #4d9cf0;background:#fff"></div>
<div class="t tree" style="left:109px;top:214.3px;transform:scaleX(0.84);transform-origin:0 0;">FactInternetSales</div>
<div class="a" style="left:23px;top:245.4px;width:0;height:42.6px;border-left:1px dotted #9a9a9a"></div>
<div class="a" style="left:23px;top:255.0px;width:17px;height:0;border-top:1px dotted #8a8a8a"></div>
<svg style="left:40px;top:247.4px" width="9" height="8" viewBox="0 0 9 8"><path d="M0.8 3.8 L3 6 L7.6 0.8" fill="none" stroke="#239a23" stroke-width="1.9"/></svg>
<svg style="left:49px;top:247.4px" width="15" height="13" viewBox="0 0 15 13"><path d="M6.6 0.8 H13 V11.8 H6.6 Z" fill="#eef0ff" stroke="#6a70e0" stroke-width="1.3"/><path d="M6.8 1.2 H12.8" stroke="#4a50d8" stroke-width="1.6" stroke-dasharray="1.3 0.9"/><path d="M0.8 4.6 H5 V2.4 L9.8 6.3 L5 10.2 V8 H0.8 Z" fill="#5cb41e" stroke="#2f8a12" stroke-width="0.8" stroke-linejoin="round"/><path d="M1.8 6.3 H6.6" stroke="#e6e83a" stroke-width="1.3"/></svg>
<div class="t tree" style="left:76px;top:248.0px;transform:scaleX(0.852);transform-origin:0 0;">Sorter Transformation</div>
<div class="a" style="left:23px;top:271.9px;width:17px;height:0;border-top:1px dotted #8a8a8a"></div>
<svg style="left:40px;top:264.2px" width="9" height="8" viewBox="0 0 9 8"><path d="M0.8 3.8 L3 6 L7.6 0.8" fill="none" stroke="#239a23" stroke-width="1.9"/></svg>
<svg style="left:49px;top:264.2px" width="15" height="13" viewBox="0 0 15 13"><path d="M6.6 0.8 H13 V11.8 H6.6 Z" fill="#eef0ff" stroke="#6a70e0" stroke-width="1.3"/><path d="M6.8 1.2 H12.8" stroke="#4a50d8" stroke-width="1.6" stroke-dasharray="1.3 0.9"/><path d="M0.8 4.6 H5 V2.4 L9.8 6.3 L5 10.2 V8 H0.8 Z" fill="#5cb41e" stroke="#2f8a12" stroke-width="0.8" stroke-linejoin="round"/><path d="M1.8 6.3 H6.6" stroke="#e6e83a" stroke-width="1.3"/></svg>
<div class="t tree" style="left:76px;top:264.9px;transform:scaleX(0.881);transform-origin:0 0;">Target_DimProduct</div>
<div class="a" style="left:23px;top:288.7px;width:17px;height:0;border-top:1px dotted #8a8a8a"></div>
<svg style="left:40px;top:281.1px" width="9" height="8" viewBox="0 0 9 8"><path d="M0.8 3.8 L3 6 L7.6 0.8" fill="none" stroke="#239a23" stroke-width="1.9"/></svg>
<svg style="left:49px;top:281.1px" width="15" height="13" viewBox="0 0 15 13"><path d="M6.6 0.8 H13 V11.8 H6.6 Z" fill="#eef0ff" stroke="#6a70e0" stroke-width="1.3"/><path d="M6.8 1.2 H12.8" stroke="#4a50d8" stroke-width="1.6" stroke-dasharray="1.3 0.9"/><path d="M0.8 4.6 H5 V2.4 L9.8 6.3 L5 10.2 V8 H0.8 Z" fill="#5cb41e" stroke="#2f8a12" stroke-width="0.8" stroke-linejoin="round"/><path d="M1.8 6.3 H6.6" stroke="#e6e83a" stroke-width="1.3"/></svg>
<div class="t tree" style="left:76px;top:281.7px;transform:scaleX(0.873);transform-origin:0 0;">Target_MultiCast</div></div></div>
<svg style="left:198.2px;top:44.6px" width="16" height="16" viewBox="0 0 16 16"><path d="M1 14.6 L5 10" stroke="#e8a83a" stroke-width="2.6" stroke-linecap="round"/><path d="M1.6 14.2 L4.6 10.6" stroke="#fbe2a0" stroke-width="0.8"/><circle cx="9.6" cy="6" r="5.2" fill="#d6ebfd" stroke="#3f8fe0" stroke-width="1.3"/><path d="M6.4 6 H11.6 M9.6 3.6 L12 6 L9.6 8.4" fill="none" stroke="#1f6fd8" stroke-width="1.3"/><path d="M1.6 2.4 V8.4 M1.6 5.4 H4.4" stroke="#1f6fd8" stroke-width="1.4"/></svg>
<svg style="left:219.8px;top:44.6px" width="16" height="16" viewBox="0 0 16 16"><path d="M3 11 V0.8 L12.6 11 Z" fill="#6aa8f0" stroke="#2f7ad8" stroke-width="1"/><path d="M5.4 9 V5.6 L8.6 9 Z" fill="#d9eafc"/><path d="M0.6 11.4 H15 V15.2 H0.6 Z" fill="#f0c010" stroke="#a87c04" stroke-width="0.8"/><path d="M2.6 13 V15 M5 13 V15 M7.4 13 V15 M9.8 13 V15 M12.2 13 V15" stroke="#6a5004" stroke-width="0.9"/><path d="M9 11 L14.4 5 L16 6.6 L10.6 12.2 Z" fill="#e8502a" stroke="#a8341a" stroke-width="0.4"/></svg>
<svg style="left:241.2px;top:44.6px" width="16" height="16" viewBox="0 0 16 16"><path d="M0.8 0.8 H11.4 V13 H0.8 Z" fill="#3aa63a" stroke="#1f7e1f" stroke-width="0.9"/><path d="M2.6 3.2 H9.6 M2.6 5.4 H9.6 M2.6 7.6 H9.6 M2.6 9.8 H7" stroke="#e4f6e0" stroke-width="1"/><path d="M0.6 15.2 H6" stroke="#555" stroke-width="1.2" stroke-dasharray="1.2 1.2"/><path d="M8.2 14.8 L9.2 11.8 L13.6 7.4 L15.6 9.4 L11.2 13.8 Z" fill="#3f86e0" stroke="#2a5fb0" stroke-width="0.5"/><path d="M13.6 7.4 L14.6 6.4 L16.4 8.2 L15.6 9.4 Z" fill="#e8502a"/><path d="M8.2 14.8 L9.2 11.8 L11.2 13.8 Z" fill="#f2c06a"/></svg>
<svg style="left:262.7px;top:44.6px" width="16" height="16" viewBox="0 0 16 16"><path d="M0.8 0.8 H12.6 V13 H0.8 Z" fill="#eef4ff" stroke="#2f6fd0" stroke-width="1"/><path d="M0.8 0.8 H12.6 V3.6 H0.8 Z" fill="#3f86e0"/><path d="M0.8 6.6 H12.6 M0.8 9.6 H12.6 M4.6 3.6 V13 M8.6 3.6 V13" stroke="#3f86e0" stroke-width="0.9"/><path d="M0.6 15.2 H6" stroke="#555" stroke-width="1.2" stroke-dasharray="1.2 1.2"/><path d="M8.2 14.8 L9.2 11.8 L13.6 7.4 L15.6 9.4 L11.2 13.8 Z" fill="#3f86e0" stroke="#2a5fb0" stroke-width="0.5"/><path d="M13.6 7.4 L14.6 6.4 L16.4 8.2 L15.6 9.4 Z" fill="#e8502a"/><path d="M8.2 14.8 L9.2 11.8 L11.2 13.8 Z" fill="#f2c06a"/></svg>
<div class="a" style="left:281.5px;top:42.6px;width:21.4px;height:20.3px;background:#c3dcf3;box-sizing:border-box;border:1px solid #9ccaf2;"></div>
<svg style="left:284.2px;top:44.6px" width="16" height="16" viewBox="0 0 16 16"><path d="M3.6 3.6 H10.6 M3.6 10.4 H10.6 M3.6 3.6 V10.4 M10.6 3.6 V10.4" stroke="#2a9a2a" stroke-width="1"/><g fill="#eafbe6" stroke="#2a9a2a" stroke-width="1.2"><circle cx="3.6" cy="3.6" r="2.3"/><circle cx="10.6" cy="3.6" r="2.3"/><circle cx="3.6" cy="10.4" r="2.3"/><circle cx="10.6" cy="10.4" r="2.3"/></g><path d="M0.6 15.2 H6" stroke="#555" stroke-width="1.2" stroke-dasharray="1.2 1.2"/><path d="M8.2 14.8 L9.2 11.8 L13.6 7.4 L15.6 9.4 L11.2 13.8 Z" fill="#3f86e0" stroke="#2a5fb0" stroke-width="0.5"/><path d="M13.6 7.4 L14.6 6.4 L16.4 8.2 L15.6 9.4 Z" fill="#e8502a"/><path d="M8.2 14.8 L9.2 11.8 L11.2 13.8 Z" fill="#f2c06a"/></svg>
<div class="a" style="left:306.6px;top:43.4px;width:1px;height:20px;background:#a6a6a6;"></div>
<div class="a" style="left:307.6px;top:43.4px;width:1px;height:20px;background:#ffffff;"></div>
<div class="a" style="left:312px;top:44.5px;width:229.7px;height:15.9px;background:#ffffff;"></div>
<div class="a" style="left:527.9px;top:44.5px;width:13.8px;height:15.9px;background:#f6f6f6;"></div>
<svg style="left:530.8px;top:51.2px" width="7" height="4" viewBox="0 0 7 4"><path d="M0 0 H7 L3.5 3.4 Z" fill="#000"/></svg>
<svg style="left:316.3px;top:45.2px" width="14" height="15" viewBox="0 0 14 15"><path d="M0 13.6 H9" stroke="#222" stroke-width="1.2"/><path d="M3 7 H7 M8.4 3 V11 M8.4 3 H10 M8.4 7 H10 M8.4 11 H10" stroke="#2a6fd0" stroke-width="0.9" fill="none"/><path d="M0.6 5.4 H3.6 V8.6 H0.6 Z" fill="#dbe9ff" stroke="#2a6fd0" stroke-width="0.9"/><path d="M5.4 5.4 H8.4 V8.6 H5.4 Z" fill="#f4c842" stroke="#2a6fd0" stroke-width="0.9"/><path d="M10 1.2 H13.4 V4.4 H10 Z M10 5.4 H13.4 V8.6 H10 Z" fill="#f4c842" stroke="#b8860b" stroke-width="0.8"/><path d="M10 9.6 H13.4 V12.8 H10 Z" fill="#dbe9ff" stroke="#2a6fd0" stroke-width="0.9"/><path d="M5.6 1.2 H8.4 V3.6 H5.6 Z" fill="#dbe9ff" stroke="#2a6fd0" stroke-width="0.8"/></svg>
<div class="t" style="left:332.4px;top:46.5px;font-size:11.5px;color:#161616;transform:scaleX(0.846);transform-origin:0 0">m_Sorter_Transformation</div>
<div class="t" style="left:198px;top:73.6px;font-family:'Liberation Serif',serif;font-style:italic;font-weight:bold;font-size:16px;color:#cdcdcd;text-shadow:-0.8px -0.8px 0 #f6f6f6,0.9px 0.9px 0 #858585;transform:scaleX(1.105);transform-origin:0 0">Mapping Designer</div>
<div class="a" style="left:211px;top:120px;width:186.8px;height:337.6px;background:#ffffff;"></div>
<div class="a" style="left:395.4px;top:120px;width:2.4px;height:337.6px;background:#7c7c7c;"></div>
<div class="a" style="left:211px;top:455.2px;width:186.8px;height:2.4px;background:#7c7c7c;"></div>
<div class="a" style="left:212.2px;top:121.3px;width:183.2px;height:28.9px;background:linear-gradient(90deg,#20902a 0%,#26952e 48%,#4cab52 72%,#70c072 100%);"></div>
<div class="t tb" style="left:243.5px;top:121.91px;font-size:11.7px;color:#0c0c0c;transform:scaleX(0.842);transform-origin:0 0">FactInternetSales (Micros...</div>
<div class="t tb" style="left:243.5px;top:133.5px;font-size:11.7px;color:#0c0c0c;transform:scaleX(0.842);transform-origin:0 0">Source Definition</div>
<div class="a" style="left:369.9px;top:123.3px;width:10.8px;height:9.5px;background:#f8f8f8;box-sizing:border-box;border:1px solid #505050;box-shadow:inset 1px 1px 0 #fff;"></div>
<div class="a" style="left:382.8px;top:123.3px;width:10.8px;height:9.5px;background:#f8f8f8;box-sizing:border-box;border:1px solid #505050;box-shadow:inset 1px 1px 0 #fff;"></div>
<div class="t" style="left:373.3px;top:124.1px;font-size:8px;color:#111">?</div>
<div class="a" style="left:385.8px;top:128.3px;width:5.2px;height:1.8px;background:#000;"></div>
<div class="a" style="left:212.2px;top:150.2px;width:12.3px;height:14.6px;background:#f0f0f0;box-sizing:border-box;border-top:1px solid #fff;border-left:1px solid #fff;border-right:1px solid #a0a0a0;border-bottom:1px solid #a0a0a0;"></div>
<div class="a" style="left:383px;top:150.2px;width:12.4px;height:14.6px;background:#f0f0f0;box-sizing:border-box;border-top:1px solid #fff;border-left:1px solid #fff;border-right:1px solid #a0a0a0;border-bottom:1px solid #a0a0a0;"></div>
<div class="a" style="left:224.5px;top:150.2px;width:16.5px;height:14.6px;background:#f1f1f1;box-sizing:border-box;border-top:1px solid #fff;border-left:1px solid #fff;border-right:1px solid #9a9a9a;border-bottom:1px solid #9a9a9a;"></div>
<div class="t tb" style="left:230.5px;top:152px;font-size:11.7px;color:#222;transform:scaleX(0.842);transform-origin:0 0">K.</div>
<div class="a" style="left:241px;top:150.2px;width:93.5px;height:14.6px;background:#f1f1f1;box-sizing:border-box;border-top:1px solid #fff;border-left:1px solid #fff;border-right:1px solid #9a9a9a;border-bottom:1px solid #9a9a9a;"></div>
<div class="t tb" style="left:248px;top:152px;font-size:11.7px;color:#222;transform:scaleX(0.842);transform-origin:0 0">Name</div>
<div class="a" style="left:334.5px;top:150.2px;width:48.5px;height:14.6px;background:#f1f1f1;box-sizing:border-box;border-top:1px solid #fff;border-left:1px solid #fff;border-right:1px solid #9a9a9a;border-bottom:1px solid #9a9a9a;"></div>
<div class="t tb" style="left:341px;top:152px;font-size:11.7px;color:#222;transform:scaleX(0.842);transform-origin:0 0">Datatype</div>
<div class="a" style="left:212.2px;top:164.8px;width:12.3px;height:289.1px;background:#f0f0f0;"></div>
<div class="a" style="left:383px;top:164.8px;width:12.4px;height:289.1px;background:#f0f0f0;"></div>
<div class="a" style="left:223.5px;top:164.8px;width:1px;height:273.7px;background:#b4b4b4;"></div>
<div class="a" style="left:212.2px;top:164.8px;width:0.7px;height:289.1px;background:#a8a8a8;"></div>
<div class="a" style="left:383px;top:164.8px;width:1px;height:273.7px;background:#bdbdbd;"></div>
<div class="a" style="left:224.5px;top:166.7px;width:158.5px;height:1px;background:#ececec;"></div>
<div class="a" style="left:212.2px;top:167.6px;width:11.3px;height:0.8px;background:#fbfbfb;"></div>
<div class="a" style="left:384px;top:167.6px;width:11.4px;height:0.8px;background:#fbfbfb;"></div>
<div class="a" style="left:212.2px;top:166.7px;width:12.3px;height:0.9px;background:#a9a9a9;"></div>
<div class="a" style="left:383px;top:166.7px;width:12.4px;height:0.9px;background:#a9a9a9;"></div>
<div class="a" style="left:224.5px;top:179.8px;width:158.5px;height:1px;background:#ececec;"></div>
<div class="a" style="left:212.2px;top:180.7px;width:11.3px;height:0.8px;background:#fbfbfb;"></div>
<div class="a" style="left:384px;top:180.7px;width:11.4px;height:0.8px;background:#fbfbfb;"></div>
<div class="a" style="left:212.2px;top:179.8px;width:12.3px;height:0.9px;background:#a9a9a9;"></div>
<div class="a" style="left:383px;top:179.8px;width:12.4px;height:0.9px;background:#a9a9a9;"></div>
<div class="a" style="left:224.5px;top:192.9px;width:158.5px;height:1px;background:#ececec;"></div>
<div class="a" style="left:212.2px;top:193.8px;width:11.3px;height:0.8px;background:#fbfbfb;"></div>
<div class="a" style="left:384px;top:193.8px;width:11.4px;height:0.8px;background:#fbfbfb;"></div>
<div class="a" style="left:212.2px;top:192.9px;width:12.3px;height:0.9px;background:#a9a9a9;"></div>
<div class="a" style="left:383px;top:192.9px;width:12.4px;height:0.9px;background:#a9a9a9;"></div>
<div class="a" style="left:224.5px;top:206px;width:158.5px;height:1px;background:#ececec;"></div>
<div class="a" style="left:212.2px;top:206.9px;width:11.3px;height:0.8px;background:#fbfbfb;"></div>
<div class="a" style="left:384px;top:206.9px;width:11.4px;height:0.8px;background:#fbfbfb;"></div>
<div class="a" style="left:212.2px;top:206px;width:12.3px;height:0.9px;background:#a9a9a9;"></div>
<div class="a" style="left:383px;top:206px;width:12.4px;height:0.9px;background:#a9a9a9;"></div>
<div class="a" style="left:224.5px;top:219.1px;width:158.5px;height:1px;background:#ececec;"></div>
<div class="a" style="left:212.2px;top:220px;width:11.3px;height:0.8px;background:#fbfbfb;"></div>
<div class="a" style="left:384px;top:220px;width:11.4px;height:0.8px;background:#fbfbfb;"></div>
<div class="a" style="left:212.2px;top:219.1px;width:12.3px;height:0.9px;background:#a9a9a9;"></div>
<div class="a" style="left:383px;top:219.1px;width:12.4px;height:0.9px;background:#a9a9a9;"></div>
<div class="a" style="left:224.5px;top:232.2px;width:158.5px;height:1px;background:#ececec;"></div>
<div class="a" style="left:212.2px;top:233.1px;width:11.3px;height:0.8px;background:#fbfbfb;"></div>
<div class="a" style="left:384px;top:233.1px;width:11.4px;height:0.8px;background:#fbfbfb;"></div>
<div class="a" style="left:212.2px;top:232.2px;width:12.3px;height:0.9px;background:#a9a9a9;"></div>
<div class="a" style="left:383px;top:232.2px;width:12.4px;height:0.9px;background:#a9a9a9;"></div>
<div class="a" style="left:224.5px;top:245.3px;width:158.5px;height:1px;background:#ececec;"></div>
<div class="a" style="left:212.2px;top:246.2px;width:11.3px;height:0.8px;background:#fbfbfb;"></div>
<div class="a" style="left:384px;top:246.2px;width:11.4px;height:0.8px;background:#fbfbfb;"></div>
<div class="a" style="left:212.2px;top:245.3px;width:12.3px;height:0.9px;background:#a9a9a9;"></div>
<div class="a" style="left:383px;top:245.3px;width:12.4px;height:0.9px;background:#a9a9a9;"></div>
<div class="a" style="left:224.5px;top:258.4px;width:158.5px;height:1px;background:#ececec;"></div>
<div class="a" style="left:212.2px;top:259.3px;width:11.3px;height:0.8px;background:#fbfbfb;"></div>
<div class="a" style="left:384px;top:259.3px;width:11.4px;height:0.8px;background:#fbfbfb;"></div>
<div class="a" style="left:212.2px;top:258.4px;width:12.3px;height:0.9px;background:#a9a9a9;"></div>
<div class="a" style="left:383px;top:258.4px;width:12.4px;height:0.9px;background:#a9a9a9;"></div>
<div class="a" style="left:224.5px;top:271.5px;width:158.5px;height:1px;background:#ececec;"></div>
<div class="a" style="left:212.2px;top:272.4px;width:11.3px;height:0.8px;background:#fbfbfb;"></div>
<div class="a" style="left:384px;top:272.4px;width:11.4px;height:0.8px;background:#fbfbfb;"></div>
<div class="a" style="left:212.2px;top:271.5px;width:12.3px;height:0.9px;background:#a9a9a9;"></div>
<div class="a" style="left:383px;top:271.5px;width:12.4px;height:0.9px;background:#a9a9a9;"></div>
<div class="a" style="left:224.5px;top:284.6px;width:158.5px;height:1px;background:#ececec;"></div>
<div class="a" style="left:212.2px;top:285.5px;width:11.3px;height:0.8px;background:#fbfbfb;"></div>
<div class="a" style="left:384px;top:285.5px;width:11.4px;height:0.8px;background:#fbfbfb;"></div>
<div class="a" style="left:212.2px;top:284.6px;width:12.3px;height:0.9px;background:#a9a9a9;"></div>
<div class="a" style="left:383px;top:284.6px;width:12.4px;height:0.9px;background:#a9a9a9;"></div>
<div class="a" style="left:224.5px;top:297.7px;width:158.5px;height:1px;background:#ececec;"></div>
<div class="a" style="left:212.2px;top:298.6px;width:11.3px;height:0.8px;background:#fbfbfb;"></div>
<div class="a" style="left:384px;top:298.6px;width:11.4px;height:0.8px;background:#fbfbfb;"></div>
<div class="a" style="left:212.2px;top:297.7px;width:12.3px;height:0.9px;background:#a9a9a9;"></div>
<div class="a" style="left:383px;top:297.7px;width:12.4px;height:0.9px;background:#a9a9a9;"></div>
<div class="a" style="left:224.5px;top:310.8px;width:158.5px;height:1px;background:#ececec;"></div>
<div class="a" style="left:212.2px;top:311.7px;width:11.3px;height:0.8px;background:#fbfbfb;"></div>
<div class="a" style="left:384px;top:311.7px;width:11.4px;height:0.8px;background:#fbfbfb;"></div>
<div class="a" style="left:212.2px;top:310.8px;width:12.3px;height:0.9px;background:#a9a9a9;"></div>
<div class="a" style="left:383px;top:310.8px;width:12.4px;height:0.9px;background:#a9a9a9;"></div>
<div class="a" style="left:224.5px;top:323.9px;width:158.5px;height:1px;background:#ececec;"></div>
<div class="a" style="left:212.2px;top:324.8px;width:11.3px;height:0.8px;background:#fbfbfb;"></div>
<div class="a" style="left:384px;top:324.8px;width:11.4px;height:0.8px;background:#fbfbfb;"></div>
<div class="a" style="left:212.2px;top:323.9px;width:12.3px;height:0.9px;background:#a9a9a9;"></div>
<div class="a" style="left:383px;top:323.9px;width:12.4px;height:0.9px;background:#a9a9a9;"></div>
<div class="a" style="left:224.5px;top:337px;width:158.5px;height:1px;background:#ececec;"></div>
<div class="a" style="left:212.2px;top:337.9px;width:11.3px;height:0.8px;background:#fbfbfb;"></div>
<div class="a" style="left:384px;top:337.9px;width:11.4px;height:0.8px;background:#fbfbfb;"></div>
<div class="a" style="left:212.2px;top:337px;width:12.3px;height:0.9px;background:#a9a9a9;"></div>
<div class="a" style="left:383px;top:337px;width:12.4px;height:0.9px;background:#a9a9a9;"></div>
<div class="a" style="left:224.5px;top:350.1px;width:158.5px;height:1px;background:#ececec;"></div>
<div class="a" style="left:212.2px;top:351px;width:11.3px;height:0.8px;background:#fbfbfb;"></div>
<div class="a" style="left:384px;top:351px;width:11.4px;height:0.8px;background:#fbfbfb;"></div>
<div class="a" style="left:212.2px;top:350.1px;width:12.3px;height:0.9px;background:#a9a9a9;"></div>
<div class="a" style="left:383px;top:350.1px;width:12.4px;height:0.9px;background:#a9a9a9;"></div>
<div class="a" style="left:224.5px;top:363.2px;width:158.5px;height:1px;background:#ececec;"></div>
<div class="a" style="left:212.2px;top:364.1px;width:11.3px;height:0.8px;background:#fbfbfb;"></div>
<div class="a" style="left:384px;top:364.1px;width:11.4px;height:0.8px;background:#fbfbfb;"></div>
<div class="a" style="left:212.2px;top:363.2px;width:12.3px;height:0.9px;background:#a9a9a9;"></div>
<div class="a" style="left:383px;top:363.2px;width:12.4px;height:0.9px;background:#a9a9a9;"></div>
<div class="a" style="left:224.5px;top:376.3px;width:158.5px;height:1px;background:#ececec;"></div>
<div class="a" style="left:212.2px;top:377.2px;width:11.3px;height:0.8px;background:#fbfbfb;"></div>
<div class="a" style="left:384px;top:377.2px;width:11.4px;height:0.8px;background:#fbfbfb;"></div>
<div class="a" style="left:212.2px;top:376.3px;width:12.3px;height:0.9px;background:#a9a9a9;"></div>
<div class="a" style="left:383px;top:376.3px;width:12.4px;height:0.9px;background:#a9a9a9;"></div>
<div class="a" style="left:224.5px;top:389.4px;width:158.5px;height:1px;background:#ececec;"></div>
<div class="a" style="left:212.2px;top:390.3px;width:11.3px;height:0.8px;background:#fbfbfb;"></div>
<div class="a" style="left:384px;top:390.3px;width:11.4px;height:0.8px;background:#fbfbfb;"></div>
<div class="a" style="left:212.2px;top:389.4px;width:12.3px;height:0.9px;background:#a9a9a9;"></div>
<div class="a" style="left:383px;top:389.4px;width:12.4px;height:0.9px;background:#a9a9a9;"></div>
<div class="a" style="left:224.5px;top:402.5px;width:158.5px;height:1px;background:#ececec;"></div>
<div class="a" style="left:212.2px;top:403.4px;width:11.3px;height:0.8px;background:#fbfbfb;"></div>
<div class="a" style="left:384px;top:403.4px;width:11.4px;height:0.8px;background:#fbfbfb;"></div>
<div class="a" style="left:212.2px;top:402.5px;width:12.3px;height:0.9px;background:#a9a9a9;"></div>
<div class="a" style="left:383px;top:402.5px;width:12.4px;height:0.9px;background:#a9a9a9;"></div>
<div class="a" style="left:224.5px;top:415.6px;width:158.5px;height:1px;background:#ececec;"></div>
<div class="a" style="left:212.2px;top:416.5px;width:11.3px;height:0.8px;background:#fbfbfb;"></div>
<div class="a" style="left:384px;top:416.5px;width:11.4px;height:0.8px;background:#fbfbfb;"></div>
<div class="a" style="left:212.2px;top:415.6px;width:12.3px;height:0.9px;background:#a9a9a9;"></div>
<div class="a" style="left:383px;top:415.6px;width:12.4px;height:0.9px;background:#a9a9a9;"></div>
<div class="a" style="left:224.5px;top:428.7px;width:158.5px;height:1px;background:#ececec;"></div>
<div class="a" style="left:241px;top:166.8px;width:1px;height:271.7px;background:#ececec;"></div>
<div class="a" style="left:334.5px;top:166.8px;width:1px;height:271.7px;background:#ececec;"></div>
<div class="t tb" style="left:248px;top:168.81px;font-size:11.7px;color:#1c1c1c;transform:scaleX(0.842);transform-origin:0 0">ProductKey</div>
<div class="t tb" style="left:340.5px;top:168.81px;font-size:11.7px;color:#1c1c1c;transform:scaleX(0.842);transform-origin:0 0">int</div>
<svg style="left:388px;top:171.15px" width="3" height="5.3" viewBox="0 0 3 5.3"><path d="M0 0 L3 2.65 L0 5.3 Z" fill="#000"/></svg>
<div class="t tb" style="left:248px;top:181.91px;font-size:11.7px;color:#1c1c1c;transform:scaleX(0.842);transform-origin:0 0">OrderDateKey</div>
<div class="t tb" style="left:340.5px;top:181.91px;font-size:11.7px;color:#1c1c1c;transform:scaleX(0.842);transform-origin:0 0">int</div>
<svg style="left:388px;top:184.25px" width="3" height="5.3" viewBox="0 0 3 5.3"><path d="M0 0 L3 2.65 L0 5.3 Z" fill="#000"/></svg>
<div class="t tb" style="left:248px;top:195px;font-size:11.7px;color:#1c1c1c;transform:scaleX(0.842);transform-origin:0 0">DueDateKey</div>
<div class="t tb" style="left:340.5px;top:195px;font-size:11.7px;color:#1c1c1c;transform:scaleX(0.842);transform-origin:0 0">int</div>
<svg style="left:388px;top:197.35px" width="3" height="5.3" viewBox="0 0 3 5.3"><path d="M0 0 L3 2.65 L0 5.3 Z" fill="#000"/></svg>
<div class="t tb" style="left:248px;top:208.11px;font-size:11.7px;color:#1c1c1c;transform:scaleX(0.842);transform-origin:0 0">ShipDateKey</div>
<div class="t tb" style="left:340.5px;top:208.11px;font-size:11.7px;color:#1c1c1c;transform:scaleX(0.842);transform-origin:0 0">int</div>
<svg style="left:388px;top:210.45px" width="3" height="5.3" viewBox="0 0 3 5.3"><path d="M0 0 L3 2.65 L0 5.3 Z" fill="#000"/></svg>
<div class="t tb" style="left:248px;top:221.21px;font-size:11.7px;color:#1c1c1c;transform:scaleX(0.842);transform-origin:0 0">CustomerKey</div>
<div class="t tb" style="left:340.5px;top:221.21px;font-size:11.7px;color:#1c1c1c;transform:scaleX(0.842);transform-origin:0 0">int</div>
<svg style="left:388px;top:223.55px" width="3" height="5.3" viewBox="0 0 3 5.3"><path d="M0 0 L3 2.65 L0 5.3 Z" fill="#000"/></svg>
<div class="t tb" style="left:248px;top:234.31px;font-size:11.7px;color:#1c1c1c;transform:scaleX(0.842);transform-origin:0 0">SalesTerritoryKey</div>
<div class="t tb" style="left:340.5px;top:234.31px;font-size:11.7px;color:#1c1c1c;transform:scaleX(0.842);transform-origin:0 0">int</div>
<svg style="left:388px;top:236.65px" width="3" height="5.3" viewBox="0 0 3 5.3"><path d="M0 0 L3 2.65 L0 5.3 Z" fill="#000"/></svg>
<div class="t tb" style="left:248px;top:247.41px;font-size:11.7px;color:#1c1c1c;transform:scaleX(0.842);transform-origin:0 0">OrderQuantity</div>
<div class="t tb" style="left:340.5px;top:247.41px;font-size:11.7px;color:#1c1c1c;transform:scaleX(0.842);transform-origin:0 0">smallint</div>
<svg style="left:388px;top:249.75px" width="3" height="5.3" viewBox="0 0 3 5.3"><path d="M0 0 L3 2.65 L0 5.3 Z" fill="#000"/></svg>
<div class="t tb" style="left:248px;top:260.5px;font-size:11.7px;color:#1c1c1c;transform:scaleX(0.842);transform-origin:0 0">UnitPrice</div>
<div class="t tb" style="left:340.5px;top:260.5px;font-size:11.7px;color:#1c1c1c;transform:scaleX(0.842);transform-origin:0 0">money</div>
<svg style="left:388px;top:262.85px" width="3" height="5.3" viewBox="0 0 3 5.3"><path d="M0 0 L3 2.65 L0 5.3 Z" fill="#000"/></svg>
<div class="t tb" style="left:248px;top:273.6px;font-size:11.7px;color:#1c1c1c;transform:scaleX(0.842);transform-origin:0 0">ExtendedAmount</div>
<div class="t tb" style="left:340.5px;top:273.6px;font-size:11.7px;color:#1c1c1c;transform:scaleX(0.842);transform-origin:0 0">money</div>
<svg style="left:388px;top:275.95px" width="3" height="5.3" viewBox="0 0 3 5.3"><path d="M0 0 L3 2.65 L0 5.3 Z" fill="#000"/></svg>
<div class="t tb" style="left:248px;top:286.7px;font-size:11.7px;color:#1c1c1c;transform:scaleX(0.842);transform-origin:0 0">UnitPriceDiscou...</div>
<div class="t tb" style="left:340.5px;top:286.7px;font-size:11.7px;color:#1c1c1c;transform:scaleX(0.842);transform-origin:0 0">float</div>
<svg style="left:388px;top:289.05px" width="3" height="5.3" viewBox="0 0 3 5.3"><path d="M0 0 L3 2.65 L0 5.3 Z" fill="#000"/></svg>
<div class="t tb" style="left:248px;top:299.8px;font-size:11.7px;color:#1c1c1c;transform:scaleX(0.842);transform-origin:0 0">DiscountAmount</div>
<div class="t tb" style="left:340.5px;top:299.8px;font-size:11.7px;color:#1c1c1c;transform:scaleX(0.842);transform-origin:0 0">float</div>
<svg style="left:388px;top:302.15px" width="3" height="5.3" viewBox="0 0 3 5.3"><path d="M0 0 L3 2.65 L0 5.3 Z" fill="#000"/></svg>
<div class="t tb" style="left:248px;top:312.9px;font-size:11.7px;color:#1c1c1c;transform:scaleX(0.842);transform-origin:0 0">ProductStandar...</div>
<div class="t tb" style="left:340.5px;top:312.9px;font-size:11.7px;color:#1c1c1c;transform:scaleX(0.842);transform-origin:0 0">money</div>
<svg style="left:388px;top:315.25px" width="3" height="5.3" viewBox="0 0 3 5.3"><path d="M0 0 L3 2.65 L0 5.3 Z" fill="#000"/></svg>
<div class="t tb" style="left:248px;top:326px;font-size:11.7px;color:#1c1c1c;transform:scaleX(0.842);transform-origin:0 0">TotalProductCost</div>
<div class="t tb" style="left:340.5px;top:326px;font-size:11.7px;color:#1c1c1c;transform:scaleX(0.842);transform-origin:0 0">money</div>
<svg style="left:388px;top:328.35px" width="3" height="5.3" viewBox="0 0 3 5.3"><path d="M0 0 L3 2.65 L0 5.3 Z" fill="#000"/></svg>
<div class="t tb" style="left:248px;top:339.1px;font-size:11.7px;color:#1c1c1c;transform:scaleX(0.842);transform-origin:0 0">SalesAmount</div>
<div class="t tb" style="left:340.5px;top:339.1px;font-size:11.7px;color:#1c1c1c;transform:scaleX(0.842);transform-origin:0 0">money</div>
<svg style="left:388px;top:341.45px" width="3" height="5.3" viewBox="0 0 3 5.3"><path d="M0 0 L3 2.65 L0 5.3 Z" fill="#000"/></svg>
<div class="t tb" style="left:248px;top:352.2px;font-size:11.7px;color:#1c1c1c;transform:scaleX(0.842);transform-origin:0 0">TaxAmt</div>
<div class="t tb" style="left:340.5px;top:352.2px;font-size:11.7px;color:#1c1c1c;transform:scaleX(0.842);transform-origin:0 0">money</div>
<svg style="left:388px;top:354.55px" width="3" height="5.3" viewBox="0 0 3 5.3"><path d="M0 0 L3 2.65 L0 5.3 Z" fill="#000"/></svg>
<div class="t tb" style="left:248px;top:365.3px;font-size:11.7px;color:#1c1c1c;transform:scaleX(0.842);transform-origin:0 0">Freight</div>
<div class="t tb" style="left:340.5px;top:365.3px;font-size:11.7px;color:#1c1c1c;transform:scaleX(0.842);transform-origin:0 0">money</div>
<svg style="left:388px;top:367.65px" width="3" height="5.3" viewBox="0 0 3 5.3"><path d="M0 0 L3 2.65 L0 5.3 Z" fill="#000"/></svg>
<div class="t tb" style="left:248px;top:378.4px;font-size:11.7px;color:#1c1c1c;transform:scaleX(0.842);transform-origin:0 0">OrderDate</div>
<div class="t tb" style="left:340.5px;top:378.4px;font-size:11.7px;color:#1c1c1c;transform:scaleX(0.842);transform-origin:0 0">datetime</div>
<svg style="left:388px;top:380.75px" width="3" height="5.3" viewBox="0 0 3 5.3"><path d="M0 0 L3 2.65 L0 5.3 Z" fill="#000"/></svg>
<div class="t tb" style="left:248px;top:391.5px;font-size:11.7px;color:#1c1c1c;transform:scaleX(0.842);transform-origin:0 0">DueDate</div>
<div class="t tb" style="left:340.5px;top:391.5px;font-size:11.7px;color:#1c1c1c;transform:scaleX(0.842);transform-origin:0 0">datetime</div>
<svg style="left:388px;top:393.85px" width="3" height="5.3" viewBox="0 0 3 5.3"><path d="M0 0 L3 2.65 L0 5.3 Z" fill="#000"/></svg>
<div class="t tb" style="left:248px;top:404.6px;font-size:11.7px;color:#1c1c1c;transform:scaleX(0.842);transform-origin:0 0">ShipDate</div>
<div class="t tb" style="left:340.5px;top:404.6px;font-size:11.7px;color:#1c1c1c;transform:scaleX(0.842);transform-origin:0 0">datetime</div>
<svg style="left:388px;top:406.95px" width="3" height="5.3" viewBox="0 0 3 5.3"><path d="M0 0 L3 2.65 L0 5.3 Z" fill="#000"/></svg>
<div class="a" style="left:224.5px;top:438.5px;width:158.5px;height:15.4px;background:#f8f8f8;"></div>
<div class="a" style="left:224.5px;top:438.5px;width:15.8px;height:15.4px;background:#f1f1f1;box-sizing:border-box;border:1px solid #c2c2c2;box-shadow:inset 1px 1px 0 #fbfbfb;"></div>
<svg style="left:229.9px;top:442.7px" width="4" height="7" viewBox="0 0 4 7"><path d="M4 0 L0 3.5 L4 7 Z" fill="#000"/></svg>
<div class="a" style="left:240.3px;top:438.5px;width:85.7px;height:15.4px;background:#f1f1f1;box-sizing:border-box;border:1px solid #c2c2c2;box-shadow:inset 1px 1px 0 #fbfbfb;"></div>
<div class="a" style="left:367.2px;top:438.5px;width:15.8px;height:15.4px;background:#f1f1f1;box-sizing:border-box;border:1px solid #c2c2c2;box-shadow:inset 1px 1px 0 #fbfbfb;"></div>
<svg style="left:373.6px;top:442.7px" width="4" height="7" viewBox="0 0 4 7"><path d="M0 0 L4 3.5 L0 7 Z" fill="#000"/></svg>
<div class="a" style="left:212.2px;top:440.1px;width:11.3px;height:1px;background:#c4c4c4;"></div>
<div class="a" style="left:384px;top:440.1px;width:11.4px;height:1px;background:#c4c4c4;"></div>
<div class="a" style="left:241.1px;top:169.8px;width:1px;height:8.3px;background:#f7d59c;"></div>
<div class="a" style="left:241.1px;top:182.9px;width:1px;height:8.3px;background:#f7d59c;"></div>
<div class="a" style="left:241.1px;top:196px;width:1px;height:8.3px;background:#f7d59c;"></div>
<div class="a" style="left:241.1px;top:209.1px;width:1px;height:8.3px;background:#f7d59c;"></div>
<div class="a" style="left:241.1px;top:222.2px;width:1px;height:8.3px;background:#f7d59c;"></div>
<div class="a" style="left:241.1px;top:235.3px;width:1px;height:8.3px;background:#f7d59c;"></div>
<div class="a" style="left:241.1px;top:248.4px;width:1px;height:8.3px;background:#f7d59c;"></div>
<div class="a" style="left:241.1px;top:261.5px;width:1px;height:8.3px;background:#f7d59c;"></div>
<div class="a" style="left:241.1px;top:274.6px;width:1px;height:8.3px;background:#f7d59c;"></div>
<div class="a" style="left:241.1px;top:287.7px;width:1px;height:8.3px;background:#f7d59c;"></div>
<div class="a" style="left:241.1px;top:300.8px;width:1px;height:8.3px;background:#f7d59c;"></div>
<div class="a" style="left:241.1px;top:313.9px;width:1px;height:8.3px;background:#f7d59c;"></div>
<div class="a" style="left:241.1px;top:327px;width:1px;height:8.3px;background:#f7d59c;"></div>
<div class="a" style="left:241.1px;top:340.1px;width:1px;height:8.3px;background:#f7d59c;"></div>
<div class="a" style="left:241.1px;top:353.2px;width:1px;height:8.3px;background:#f7d59c;"></div>
<div class="a" style="left:241.1px;top:366.3px;width:1px;height:8.3px;background:#f7d59c;"></div>
<div class="a" style="left:241.1px;top:379.4px;width:1px;height:8.3px;background:#f7d59c;"></div>
<div class="a" style="left:241.1px;top:392.5px;width:1px;height:8.3px;background:#f7d59c;"></div>
<div class="a" style="left:241.1px;top:405.6px;width:1px;height:8.3px;background:#f7d59c;"></div>
<svg style="left:229px;top:168px" width="9" height="13" viewBox="0 0 9 13"><circle cx="4.3" cy="4" r="2.7" fill="#e8e4d0" stroke="#2a2a2a" stroke-width="1.3"/><path d="M4.6 6.6 V11.6 M5.2 8.3 H6.6 M5.2 10.2 H6.6" stroke="#2a2a2a" stroke-width="1.5" fill="none"/><circle cx="3.6" cy="3.2" r="0.8" fill="#d05020"/></svg>
<svg style="left:210px;top:119px" width="32" height="32" viewBox="0 0 32 32"><defs><linearGradient id="t1g" x1="0" y1="0" x2="1" y2="1"><stop offset="0" stop-color="#a9a9fb"/><stop offset="0.5" stop-color="#d9dcff"/><stop offset="1" stop-color="#a8a8f4"/></linearGradient></defs><path d="M4 10.4 L18.3 4.3 L18.8 23 L5.4 28.8 Z" fill="url(#t1g)" stroke="#9c9cf0" stroke-width="0.8"/><path d="M4.2 13.2 L18.4 7 " stroke="#7676ee" stroke-width="2.2" stroke-dasharray="2.2 1.4"/><path d="M4.6 17.5 L18.5 11.5 M4.9 21.2 L18.6 15.3 M5.1 25 L18.7 19.2 M7.8 9 L8.9 27.2 M11.4 7.4 L12.4 25.7 M14.9 5.9 L15.8 24.3" stroke="#f2f4ff" stroke-width="0.8" fill="none"/><path d="M4 10.4 L5.4 28.8" stroke="#8f8fe6" stroke-width="1.4"/><path d="M14.4 13.6 L22.4 10.4 L22.2 7.2 L29.1 10.9 L24.9 18.8 L24.1 16.1 L16.2 19.6 Z" fill="#f5c211" stroke="#d9a400" stroke-width="0.7" stroke-linejoin="round"/><path d="M15.5 14.3 L23.2 11.3 L23 8.8" stroke="#ffe368" stroke-width="0.9" fill="none"/></svg>
<svg style="left:396px;top:165px" width="54" height="260" viewBox="396 165 54 260"><path d="M398 175.0 H409.3" stroke="#0a0aff" stroke-width="3.2"/><path d="M398 173.1 H409.3" stroke="#6a6af6" stroke-width="0.8"/><path d="M409 174.7 L416 174.8 L429 177.4 L438.5 177.7" fill="none" stroke="#3030ff" stroke-width="1.1"/><path d="M437.8 172.7 L447.3 177.3 L437.8 177.3 Z" fill="#8a8af8"/><path d="M437.8 177.1 L447.3 177.1 L437.8 182.9 Z" fill="#0000ff"/><path d="M398 188.1 H409.3" stroke="#0a0aff" stroke-width="3.2"/><path d="M398 186.2 H409.3" stroke="#6a6af6" stroke-width="0.8"/><path d="M409 187.8 L416 187.9 L429 190.5 L438.5 190.8" fill="none" stroke="#3030ff" stroke-width="1.1"/><path d="M437.8 185.8 L447.3 190.4 L437.8 190.4 Z" fill="#8a8af8"/><path d="M437.8 190.2 L447.3 190.2 L437.8 196.0 Z" fill="#0000ff"/><path d="M398 201.2 H409.3" stroke="#0a0aff" stroke-width="3.2"/><path d="M398 199.3 H409.3" stroke="#6a6af6" stroke-width="0.8"/><path d="M409 200.9 L416 201.0 L429 203.6 L438.5 203.9" fill="none" stroke="#3030ff" stroke-width="1.1"/><path d="M437.8 198.9 L447.3 203.5 L437.8 203.5 Z" fill="#8a8af8"/><path d="M437.8 203.3 L447.3 203.3 L437.8 209.1 Z" fill="#0000ff"/><path d="M398 214.3 H409.3" stroke="#0a0aff" stroke-width="3.2"/><path d="M398 212.4 H409.3" stroke="#6a6af6" stroke-width="0.8"/><path d="M409 214.0 L416 214.1 L429 216.7 L438.5 217.0" fill="none" stroke="#3030ff" stroke-width="1.1"/><path d="M437.8 212.0 L447.3 216.6 L437.8 216.6 Z" fill="#8a8af8"/><path d="M437.8 216.4 L447.3 216.4 L437.8 222.2 Z" fill="#0000ff"/><path d="M398 227.4 H409.3" stroke="#0a0aff" stroke-width="3.2"/><path d="M398 225.5 H409.3" stroke="#6a6af6" stroke-width="0.8"/><path d="M409 227.1 L416 227.2 L429 229.8 L438.5 230.1" fill="none" stroke="#3030ff" stroke-width="1.1"/><path d="M437.8 225.1 L447.3 229.7 L437.8 229.7 Z" fill="#8a8af8"/><path d="M437.8 229.5 L447.3 229.5 L437.8 235.3 Z" fill="#0000ff"/><path d="M398 240.5 H409.3" stroke="#0a0aff" stroke-width="3.2"/><path d="M398 238.6 H409.3" stroke="#6a6af6" stroke-width="0.8"/><path d="M409 240.2 L416 240.3 L429 242.9 L438.5 243.2" fill="none" stroke="#3030ff" stroke-width="1.1"/><path d="M437.8 238.2 L447.3 242.8 L437.8 242.8 Z" fill="#8a8af8"/><path d="M437.8 242.6 L447.3 242.6 L437.8 248.4 Z" fill="#0000ff"/><path d="M398 253.6 H409.3" stroke="#0a0aff" stroke-width="3.2"/><path d="M398 251.7 H409.3" stroke="#6a6af6" stroke-width="0.8"/><path d="M409 253.3 L416 253.4 L429 256.0 L438.5 256.3" fill="none" stroke="#3030ff" stroke-width="1.1"/><path d="M437.8 251.3 L447.3 255.9 L437.8 255.9 Z" fill="#8a8af8"/><path d="M437.8 255.7 L447.3 255.7 L437.8 261.5 Z" fill="#0000ff"/><path d="M398 266.7 H409.3" stroke="#0a0aff" stroke-width="3.2"/><path d="M398 264.8 H409.3" stroke="#6a6af6" stroke-width="0.8"/><path d="M409 266.4 L416 266.5 L429 269.1 L438.5 269.4" fill="none" stroke="#3030ff" stroke-width="1.1"/><path d="M437.8 264.4 L447.3 269.0 L437.8 269.0 Z" fill="#8a8af8"/><path d="M437.8 268.8 L447.3 268.8 L437.8 274.6 Z" fill="#0000ff"/><path d="M398 279.8 H409.3" stroke="#0a0aff" stroke-width="3.2"/><path d="M398 277.9 H409.3" stroke="#6a6af6" stroke-width="0.8"/><path d="M409 279.5 L416 279.6 L429 282.2 L438.5 282.5" fill="none" stroke="#3030ff" stroke-width="1.1"/><path d="M437.8 277.5 L447.3 282.1 L437.8 282.1 Z" fill="#8a8af8"/><path d="M437.8 281.9 L447.3 281.9 L437.8 287.7 Z" fill="#0000ff"/><path d="M398 292.9 H409.3" stroke="#0a0aff" stroke-width="3.2"/><path d="M398 291.0 H409.3" stroke="#6a6af6" stroke-width="0.8"/><path d="M409 292.6 L416 292.7 L429 295.3 L438.5 295.6" fill="none" stroke="#3030ff" stroke-width="1.1"/><path d="M437.8 290.6 L447.3 295.2 L437.8 295.2 Z" fill="#8a8af8"/><path d="M437.8 295.0 L447.3 295.0 L437.8 300.8 Z" fill="#0000ff"/><path d="M398 306.0 H409.3" stroke="#0a0aff" stroke-width="3.2"/><path d="M398 304.1 H409.3" stroke="#6a6af6" stroke-width="0.8"/><path d="M409 305.7 L416 305.8 L429 308.4 L438.5 308.7" fill="none" stroke="#3030ff" stroke-width="1.1"/><path d="M437.8 303.7 L447.3 308.3 L437.8 308.3 Z" fill="#8a8af8"/><path d="M437.8 308.1 L447.3 308.1 L437.8 313.9 Z" fill="#0000ff"/><path d="M398 319.1 H409.3" stroke="#0a0aff" stroke-width="3.2"/><path d="M398 317.2 H409.3" stroke="#6a6af6" stroke-width="0.8"/><path d="M409 318.8 L416 318.9 L429 321.5 L438.5 321.8" fill="none" stroke="#3030ff" stroke-width="1.1"/><path d="M437.8 316.8 L447.3 321.4 L437.8 321.4 Z" fill="#8a8af8"/><path d="M437.8 321.2 L447.3 321.2 L437.8 327.0 Z" fill="#0000ff"/><path d="M398 332.2 H409.3" stroke="#0a0aff" stroke-width="3.2"/><path d="M398 330.3 H409.3" stroke="#6a6af6" stroke-width="0.8"/><path d="M409 331.9 L416 332.0 L429 334.6 L438.5 334.9" fill="none" stroke="#3030ff" stroke-width="1.1"/><path d="M437.8 329.9 L447.3 334.5 L437.8 334.5 Z" fill="#8a8af8"/><path d="M437.8 334.3 L447.3 334.3 L437.8 340.1 Z" fill="#0000ff"/><path d="M398 345.3 H409.3" stroke="#0a0aff" stroke-width="3.2"/><path d="M398 343.4 H409.3" stroke="#6a6af6" stroke-width="0.8"/><path d="M409 345.0 L416 345.1 L429 347.7 L438.5 348.0" fill="none" stroke="#3030ff" stroke-width="1.1"/><path d="M437.8 343.0 L447.3 347.6 L437.8 347.6 Z" fill="#8a8af8"/><path d="M437.8 347.4 L447.3 347.4 L437.8 353.2 Z" fill="#0000ff"/><path d="M398 358.4 H409.3" stroke="#0a0aff" stroke-width="3.2"/><path d="M398 356.5 H409.3" stroke="#6a6af6" stroke-width="0.8"/><path d="M409 358.1 L416 358.2 L429 360.8 L438.5 361.1" fill="none" stroke="#3030ff" stroke-width="1.1"/><path d="M437.8 356.1 L447.3 360.7 L437.8 360.7 Z" fill="#8a8af8"/><path d="M437.8 360.5 L447.3 360.5 L437.8 366.3 Z" fill="#0000ff"/><path d="M398 371.5 H409.3" stroke="#0a0aff" stroke-width="3.2"/><path d="M398 369.6 H409.3" stroke="#6a6af6" stroke-width="0.8"/><path d="M409 371.2 L416 371.3 L429 373.9 L438.5 374.2" fill="none" stroke="#3030ff" stroke-width="1.1"/><path d="M437.8 369.2 L447.3 373.8 L437.8 373.8 Z" fill="#8a8af8"/><path d="M437.8 373.6 L447.3 373.6 L437.8 379.4 Z" fill="#0000ff"/><path d="M398 384.6 H409.3" stroke="#0a0aff" stroke-width="3.2"/><path d="M398 382.7 H409.3" stroke="#6a6af6" stroke-width="0.8"/><path d="M409 384.3 L416 384.4 L429 387.0 L438.5 387.3" fill="none" stroke="#3030ff" stroke-width="1.1"/><path d="M437.8 382.3 L447.3 386.9 L437.8 386.9 Z" fill="#8a8af8"/><path d="M437.8 386.7 L447.3 386.7 L437.8 392.5 Z" fill="#0000ff"/><path d="M398 397.7 H409.3" stroke="#0a0aff" stroke-width="3.2"/><path d="M398 395.8 H409.3" stroke="#6a6af6" stroke-width="0.8"/><path d="M409 397.4 L416 397.5 L429 400.1 L438.5 400.4" fill="none" stroke="#3030ff" stroke-width="1.1"/><path d="M437.8 395.4 L447.3 400.0 L437.8 400.0 Z" fill="#8a8af8"/><path d="M437.8 399.8 L447.3 399.8 L437.8 405.6 Z" fill="#0000ff"/><path d="M398 410.8 H409.3" stroke="#0a0aff" stroke-width="3.2"/><path d="M398 408.9 H409.3" stroke="#6a6af6" stroke-width="0.8"/><path d="M409 410.5 L416 410.6 L429 413.2 L438.5 413.5" fill="none" stroke="#3030ff" stroke-width="1.1"/><path d="M437.8 408.5 L447.3 413.1 L437.8 413.1 Z" fill="#8a8af8"/><path d="M437.8 412.9 L447.3 412.9 L437.8 418.7 Z" fill="#0000ff"/></svg>
<div class="a" style="left:447.5px;top:122.2px;width:186.8px;height:331.3px;background:#ffffff;"></div>
<div class="a" style="left:632.2px;top:122.2px;width:2.1px;height:331.3px;background:#7c7c7c;"></div>
<div class="a" style="left:447.5px;top:451.5px;width:186.8px;height:2px;background:#7c7c7c;"></div>
<div class="a" style="left:449.3px;top:123.9px;width:182.9px;height:29px;background:linear-gradient(90deg,#8c8c18 0%,#909022 50%,#a8a850 75%,#baba72 100%);"></div>
<div class="t tb" style="left:480.5px;top:124.71px;font-size:11.7px;color:#0c0c0c;transform:scaleX(0.842);transform-origin:0 0">SQ_FactInternetSales</div>
<div class="t tb" style="left:480.5px;top:136.31px;font-size:11.7px;color:#0c0c0c;transform:scaleX(0.842);transform-origin:0 0">Source Qualifier</div>
<div class="a" style="left:606px;top:126.5px;width:10.8px;height:9.5px;background:#f8f8f8;box-sizing:border-box;border:1px solid #505050;box-shadow:inset 1px 1px 0 #fff;"></div>
<div class="a" style="left:619.6px;top:126.5px;width:10.8px;height:9.5px;background:#f8f8f8;box-sizing:border-box;border:1px solid #505050;box-shadow:inset 1px 1px 0 #fff;"></div>
<div class="t" style="left:609.4px;top:127.3px;font-size:8px;color:#111">?</div>
<div class="a" style="left:622.6px;top:131.5px;width:5.2px;height:1.8px;background:#000;"></div>
<div class="a" style="left:449.3px;top:152.9px;width:12.1px;height:14.6px;background:#f0f0f0;box-sizing:border-box;border-top:1px solid #fff;border-left:1px solid #fff;border-right:1px solid #a0a0a0;border-bottom:1px solid #a0a0a0;"></div>
<div class="a" style="left:619.8px;top:152.9px;width:12.4px;height:14.6px;background:#f0f0f0;box-sizing:border-box;border-top:1px solid #fff;border-left:1px solid #fff;border-right:1px solid #a0a0a0;border-bottom:1px solid #a0a0a0;"></div>
<div class="a" style="left:461.4px;top:152.9px;width:93.4px;height:14.6px;background:#f1f1f1;box-sizing:border-box;border-top:1px solid #fff;border-left:1px solid #fff;border-right:1px solid #9a9a9a;border-bottom:1px solid #9a9a9a;"></div>
<div class="t tb" style="left:468px;top:154.5px;font-size:11.7px;color:#222;transform:scaleX(0.842);transform-origin:0 0">Name</div>
<div class="a" style="left:554.8px;top:152.9px;width:65px;height:14.6px;background:#f1f1f1;box-sizing:border-box;border-top:1px solid #fff;border-left:1px solid #fff;border-right:1px solid #9a9a9a;border-bottom:1px solid #9a9a9a;"></div>
<div class="t tb" style="left:561.6px;top:154.5px;font-size:11.7px;color:#222;transform:scaleX(0.842);transform-origin:0 0">Datatype</div>
<div class="a" style="left:449.3px;top:167.5px;width:12.1px;height:282.7px;background:#f0f0f0;"></div>
<div class="a" style="left:619.8px;top:167.5px;width:12.4px;height:282.7px;background:#f0f0f0;"></div>
<div class="a" style="left:460.4px;top:167.5px;width:1px;height:267.2px;background:#b4b4b4;"></div>
<div class="a" style="left:449.3px;top:167.5px;width:0.7px;height:282.7px;background:#a8a8a8;"></div>
<div class="a" style="left:619.8px;top:167.5px;width:1px;height:267.2px;background:#bdbdbd;"></div>
<div class="a" style="left:476px;top:170.3px;width:143.8px;height:248.9px;background:#f0f0f0;"></div>
<div class="a" style="left:461.4px;top:169.8px;width:158.4px;height:1px;background:#ececec;"></div>
<div class="a" style="left:449.3px;top:170.7px;width:11.1px;height:0.8px;background:#fbfbfb;"></div>
<div class="a" style="left:620.8px;top:170.7px;width:11.4px;height:0.8px;background:#fbfbfb;"></div>
<div class="a" style="left:449.3px;top:169.8px;width:12.1px;height:0.9px;background:#a9a9a9;"></div>
<div class="a" style="left:619.8px;top:169.8px;width:12.4px;height:0.9px;background:#a9a9a9;"></div>
<div class="a" style="left:461.4px;top:182.9px;width:158.4px;height:1px;background:#ececec;"></div>
<div class="a" style="left:449.3px;top:183.8px;width:11.1px;height:0.8px;background:#fbfbfb;"></div>
<div class="a" style="left:620.8px;top:183.8px;width:11.4px;height:0.8px;background:#fbfbfb;"></div>
<div class="a" style="left:449.3px;top:182.9px;width:12.1px;height:0.9px;background:#a9a9a9;"></div>
<div class="a" style="left:619.8px;top:182.9px;width:12.4px;height:0.9px;background:#a9a9a9;"></div>
<div class="a" style="left:461.4px;top:196px;width:158.4px;height:1px;background:#ececec;"></div>
<div class="a" style="left:449.3px;top:196.9px;width:11.1px;height:0.8px;background:#fbfbfb;"></div>
<div class="a" style="left:620.8px;top:196.9px;width:11.4px;height:0.8px;background:#fbfbfb;"></div>
<div class="a" style="left:449.3px;top:196px;width:12.1px;height:0.9px;background:#a9a9a9;"></div>
<div class="a" style="left:619.8px;top:196px;width:12.4px;height:0.9px;background:#a9a9a9;"></div>
<div class="a" style="left:461.4px;top:209.1px;width:158.4px;height:1px;background:#ececec;"></div>
<div class="a" style="left:449.3px;top:210px;width:11.1px;height:0.8px;background:#fbfbfb;"></div>
<div class="a" style="left:620.8px;top:210px;width:11.4px;height:0.8px;background:#fbfbfb;"></div>
<div class="a" style="left:449.3px;top:209.1px;width:12.1px;height:0.9px;background:#a9a9a9;"></div>
<div class="a" style="left:619.8px;top:209.1px;width:12.4px;height:0.9px;background:#a9a9a9;"></div>
<div class="a" style="left:461.4px;top:222.2px;width:158.4px;height:1px;background:#ececec;"></div>
<div class="a" style="left:449.3px;top:223.1px;width:11.1px;height:0.8px;background:#fbfbfb;"></div>
<div class="a" style="left:620.8px;top:223.1px;width:11.4px;height:0.8px;background:#fbfbfb;"></div>
<div class="a" style="left:449.3px;top:222.2px;width:12.1px;height:0.9px;background:#a9a9a9;"></div>
<div class="a" style="left:619.8px;top:222.2px;width:12.4px;height:0.9px;background:#a9a9a9;"></div>
<div class="a" style="left:461.4px;top:235.3px;width:158.4px;height:1px;background:#ececec;"></div>
<div class="a" style="left:449.3px;top:236.2px;width:11.1px;height:0.8px;background:#fbfbfb;"></div>
<div class="a" style="left:620.8px;top:236.2px;width:11.4px;height:0.8px;background:#fbfbfb;"></div>
<div class="a" style="left:449.3px;top:235.3px;width:12.1px;height:0.9px;background:#a9a9a9;"></div>
<div class="a" style="left:619.8px;top:235.3px;width:12.4px;height:0.9px;background:#a9a9a9;"></div>
<div class="a" style="left:461.4px;top:248.4px;width:158.4px;height:1px;background:#ececec;"></div>
<div class="a" style="left:449.3px;top:249.3px;width:11.1px;height:0.8px;background:#fbfbfb;"></div>
<div class="a" style="left:620.8px;top:249.3px;width:11.4px;height:0.8px;background:#fbfbfb;"></div>
<div class="a" style="left:449.3px;top:248.4px;width:12.1px;height:0.9px;background:#a9a9a9;"></div>
<div class="a" style="left:619.8px;top:248.4px;width:12.4px;height:0.9px;background:#a9a9a9;"></div>
<div class="a" style="left:461.4px;top:261.5px;width:158.4px;height:1px;background:#ececec;"></div>
<div class="a" style="left:449.3px;top:262.4px;width:11.1px;height:0.8px;background:#fbfbfb;"></div>
<div class="a" style="left:620.8px;top:262.4px;width:11.4px;height:0.8px;background:#fbfbfb;"></div>
<div class="a" style="left:449.3px;top:261.5px;width:12.1px;height:0.9px;background:#a9a9a9;"></div>
<div class="a" style="left:619.8px;top:261.5px;width:12.4px;height:0.9px;background:#a9a9a9;"></div>
<div class="a" style="left:461.4px;top:274.6px;width:158.4px;height:1px;background:#ececec;"></div>
<div class="a" style="left:449.3px;top:275.5px;width:11.1px;height:0.8px;background:#fbfbfb;"></div>
<div class="a" style="left:620.8px;top:275.5px;width:11.4px;height:0.8px;background:#fbfbfb;"></div>
<div class="a" style="left:449.3px;top:274.6px;width:12.1px;height:0.9px;background:#a9a9a9;"></div>
<div class="a" style="left:619.8px;top:274.6px;width:12.4px;height:0.9px;background:#a9a9a9;"></div>
<div class="a" style="left:461.4px;top:287.7px;width:158.4px;height:1px;background:#ececec;"></div>
<div class="a" style="left:449.3px;top:288.6px;width:11.1px;height:0.8px;background:#fbfbfb;"></div>
<div class="a" style="left:620.8px;top:288.6px;width:11.4px;height:0.8px;background:#fbfbfb;"></div>
<div class="a" style="left:449.3px;top:287.7px;width:12.1px;height:0.9px;background:#a9a9a9;"></div>
<div class="a" style="left:619.8px;top:287.7px;width:12.4px;height:0.9px;background:#a9a9a9;"></div>
<div class="a" style="left:461.4px;top:300.8px;width:158.4px;height:1px;background:#ececec;"></div>
<div class="a" style="left:449.3px;top:301.7px;width:11.1px;height:0.8px;background:#fbfbfb;"></div>
<div class="a" style="left:620.8px;top:301.7px;width:11.4px;height:0.8px;background:#fbfbfb;"></div>
<div class="a" style="left:449.3px;top:300.8px;width:12.1px;height:0.9px;background:#a9a9a9;"></div>
<div class="a" style="left:619.8px;top:300.8px;width:12.4px;height:0.9px;background:#a9a9a9;"></div>
<div class="a" style="left:461.4px;top:313.9px;width:158.4px;height:1px;background:#ececec;"></div>
<div class="a" style="left:449.3px;top:314.8px;width:11.1px;height:0.8px;background:#fbfbfb;"></div>
<div class="a" style="left:620.8px;top:314.8px;width:11.4px;height:0.8px;background:#fbfbfb;"></div>
<div class="a" style="left:449.3px;top:313.9px;width:12.1px;height:0.9px;background:#a9a9a9;"></div>
<div class="a" style="left:619.8px;top:313.9px;width:12.4px;height:0.9px;background:#a9a9a9;"></div>
<div class="a" style="left:461.4px;top:327px;width:158.4px;height:1px;background:#ececec;"></div>
<div class="a" style="left:449.3px;top:327.9px;width:11.1px;height:0.8px;background:#fbfbfb;"></div>
<div class="a" style="left:620.8px;top:327.9px;width:11.4px;height:0.8px;background:#fbfbfb;"></div>
<div class="a" style="left:449.3px;top:327px;width:12.1px;height:0.9px;background:#a9a9a9;"></div>
<div class="a" style="left:619.8px;top:327px;width:12.4px;height:0.9px;background:#a9a9a9;"></div>
<div class="a" style="left:461.4px;top:340.1px;width:158.4px;height:1px;background:#ececec;"></div>
<div class="a" style="left:449.3px;top:341px;width:11.1px;height:0.8px;background:#fbfbfb;"></div>
<div class="a" style="left:620.8px;top:341px;width:11.4px;height:0.8px;background:#fbfbfb;"></div>
<div class="a" style="left:449.3px;top:340.1px;width:12.1px;height:0.9px;background:#a9a9a9;"></div>
<div class="a" style="left:619.8px;top:340.1px;width:12.4px;height:0.9px;background:#a9a9a9;"></div>
<div class="a" style="left:461.4px;top:353.2px;width:158.4px;height:1px;background:#ececec;"></div>
<div class="a" style="left:449.3px;top:354.1px;width:11.1px;height:0.8px;background:#fbfbfb;"></div>
<div class="a" style="left:620.8px;top:354.1px;width:11.4px;height:0.8px;background:#fbfbfb;"></div>
<div class="a" style="left:449.3px;top:353.2px;width:12.1px;height:0.9px;background:#a9a9a9;"></div>
<div class="a" style="left:619.8px;top:353.2px;width:12.4px;height:0.9px;background:#a9a9a9;"></div>
<div class="a" style="left:461.4px;top:366.3px;width:158.4px;height:1px;background:#ececec;"></div>
<div class="a" style="left:449.3px;top:367.2px;width:11.1px;height:0.8px;background:#fbfbfb;"></div>
<div class="a" style="left:620.8px;top:367.2px;width:11.4px;height:0.8px;background:#fbfbfb;"></div>
<div class="a" style="left:449.3px;top:366.3px;width:12.1px;height:0.9px;background:#a9a9a9;"></div>
<div class="a" style="left:619.8px;top:366.3px;width:12.4px;height:0.9px;background:#a9a9a9;"></div>
<div class="a" style="left:461.4px;top:379.4px;width:158.4px;height:1px;background:#ececec;"></div>
<div class="a" style="left:449.3px;top:380.3px;width:11.1px;height:0.8px;background:#fbfbfb;"></div>
<div class="a" style="left:620.8px;top:380.3px;width:11.4px;height:0.8px;background:#fbfbfb;"></div>
<div class="a" style="left:449.3px;top:379.4px;width:12.1px;height:0.9px;background:#a9a9a9;"></div>
<div class="a" style="left:619.8px;top:379.4px;width:12.4px;height:0.9px;background:#a9a9a9;"></div>
<div class="a" style="left:461.4px;top:392.5px;width:158.4px;height:1px;background:#ececec;"></div>
<div class="a" style="left:449.3px;top:393.4px;width:11.1px;height:0.8px;background:#fbfbfb;"></div>
<div class="a" style="left:620.8px;top:393.4px;width:11.4px;height:0.8px;background:#fbfbfb;"></div>
<div class="a" style="left:449.3px;top:392.5px;width:12.1px;height:0.9px;background:#a9a9a9;"></div>
<div class="a" style="left:619.8px;top:392.5px;width:12.4px;height:0.9px;background:#a9a9a9;"></div>
<div class="a" style="left:461.4px;top:405.6px;width:158.4px;height:1px;background:#ececec;"></div>
<div class="a" style="left:449.3px;top:406.5px;width:11.1px;height:0.8px;background:#fbfbfb;"></div>
<div class="a" style="left:620.8px;top:406.5px;width:11.4px;height:0.8px;background:#fbfbfb;"></div>
<div class="a" style="left:449.3px;top:405.6px;width:12.1px;height:0.9px;background:#a9a9a9;"></div>
<div class="a" style="left:619.8px;top:405.6px;width:12.4px;height:0.9px;background:#a9a9a9;"></div>
<div class="a" style="left:461.4px;top:418.7px;width:158.4px;height:1px;background:#ececec;"></div>
<div class="a" style="left:449.3px;top:419.6px;width:11.1px;height:0.8px;background:#fbfbfb;"></div>
<div class="a" style="left:620.8px;top:419.6px;width:11.4px;height:0.8px;background:#fbfbfb;"></div>
<div class="a" style="left:449.3px;top:418.7px;width:12.1px;height:0.9px;background:#a9a9a9;"></div>
<div class="a" style="left:619.8px;top:418.7px;width:12.4px;height:0.9px;background:#a9a9a9;"></div>
<div class="a" style="left:461.4px;top:431.8px;width:158.4px;height:1px;background:#ececec;"></div>
<div class="a" style="left:554.8px;top:169.5px;width:1px;height:265.2px;background:#ececec;"></div>
<div class="t tb" style="left:478.4px;top:171.21px;font-size:11.7px;color:#1c1c1c;transform:scaleX(0.842);transform-origin:0 0">ProductKey</div>
<div class="t tb" style="left:560.8px;top:171.21px;font-size:11.7px;color:#1c1c1c;transform:scaleX(0.842);transform-origin:0 0">integer</div>
<svg style="left:624.8px;top:173.55px" width="3" height="5.3" viewBox="0 0 3 5.3"><path d="M0 0 L3 2.65 L0 5.3 Z" fill="#000"/></svg>
<svg style="left:454.15px;top:173.55px" width="3" height="5.3" viewBox="0 0 3 5.3"><path d="M0 0 L3 2.65 L0 5.3 Z" fill="#000"/></svg>
<div class="t tb" style="left:478.4px;top:184.31px;font-size:11.7px;color:#1c1c1c;transform:scaleX(0.842);transform-origin:0 0">OrderDateKey</div>
<div class="t tb" style="left:560.8px;top:184.31px;font-size:11.7px;color:#1c1c1c;transform:scaleX(0.842);transform-origin:0 0">integer</div>
<svg style="left:624.8px;top:186.65px" width="3" height="5.3" viewBox="0 0 3 5.3"><path d="M0 0 L3 2.65 L0 5.3 Z" fill="#000"/></svg>
<svg style="left:454.15px;top:186.65px" width="3" height="5.3" viewBox="0 0 3 5.3"><path d="M0 0 L3 2.65 L0 5.3 Z" fill="#000"/></svg>
<div class="t tb" style="left:478.4px;top:197.41px;font-size:11.7px;color:#1c1c1c;transform:scaleX(0.842);transform-origin:0 0">DueDateKey</div>
<div class="t tb" style="left:560.8px;top:197.41px;font-size:11.7px;color:#1c1c1c;transform:scaleX(0.842);transform-origin:0 0">integer</div>
<svg style="left:624.8px;top:199.75px" width="3" height="5.3" viewBox="0 0 3 5.3"><path d="M0 0 L3 2.65 L0 5.3 Z" fill="#000"/></svg>
<svg style="left:454.15px;top:199.75px" width="3" height="5.3" viewBox="0 0 3 5.3"><path d="M0 0 L3 2.65 L0 5.3 Z" fill="#000"/></svg>
<div class="t tb" style="left:478.4px;top:210.51px;font-size:11.7px;color:#1c1c1c;transform:scaleX(0.842);transform-origin:0 0">ShipDateKey</div>
<div class="t tb" style="left:560.8px;top:210.51px;font-size:11.7px;color:#1c1c1c;transform:scaleX(0.842);transform-origin:0 0">integer</div>
<svg style="left:624.8px;top:212.85px" width="3" height="5.3" viewBox="0 0 3 5.3"><path d="M0 0 L3 2.65 L0 5.3 Z" fill="#000"/></svg>
<svg style="left:454.15px;top:212.85px" width="3" height="5.3" viewBox="0 0 3 5.3"><path d="M0 0 L3 2.65 L0 5.3 Z" fill="#000"/></svg>
<div class="t tb" style="left:478.4px;top:223.61px;font-size:11.7px;color:#1c1c1c;transform:scaleX(0.842);transform-origin:0 0">CustomerKey</div>
<div class="t tb" style="left:560.8px;top:223.61px;font-size:11.7px;color:#1c1c1c;transform:scaleX(0.842);transform-origin:0 0">integer</div>
<svg style="left:624.8px;top:225.95px" width="3" height="5.3" viewBox="0 0 3 5.3"><path d="M0 0 L3 2.65 L0 5.3 Z" fill="#000"/></svg>
<svg style="left:454.15px;top:225.95px" width="3" height="5.3" viewBox="0 0 3 5.3"><path d="M0 0 L3 2.65 L0 5.3 Z" fill="#000"/></svg>
<div class="t tb" style="left:478.4px;top:236.71px;font-size:11.7px;color:#1c1c1c;transform:scaleX(0.842);transform-origin:0 0">SalesTerritoryK...</div>
<div class="t tb" style="left:560.8px;top:236.71px;font-size:11.7px;color:#1c1c1c;transform:scaleX(0.842);transform-origin:0 0">integer</div>
<svg style="left:624.8px;top:239.05px" width="3" height="5.3" viewBox="0 0 3 5.3"><path d="M0 0 L3 2.65 L0 5.3 Z" fill="#000"/></svg>
<svg style="left:454.15px;top:239.05px" width="3" height="5.3" viewBox="0 0 3 5.3"><path d="M0 0 L3 2.65 L0 5.3 Z" fill="#000"/></svg>
<div class="t tb" style="left:478.4px;top:249.81px;font-size:11.7px;color:#1c1c1c;transform:scaleX(0.842);transform-origin:0 0">OrderQuantity</div>
<div class="t tb" style="left:560.8px;top:249.81px;font-size:11.7px;color:#1c1c1c;transform:scaleX(0.842);transform-origin:0 0">small integer</div>
<svg style="left:624.8px;top:252.15px" width="3" height="5.3" viewBox="0 0 3 5.3"><path d="M0 0 L3 2.65 L0 5.3 Z" fill="#000"/></svg>
<svg style="left:454.15px;top:252.15px" width="3" height="5.3" viewBox="0 0 3 5.3"><path d="M0 0 L3 2.65 L0 5.3 Z" fill="#000"/></svg>
<div class="t tb" style="left:478.4px;top:262.9px;font-size:11.7px;color:#1c1c1c;transform:scaleX(0.842);transform-origin:0 0">UnitPrice</div>
<div class="t tb" style="left:560.8px;top:262.9px;font-size:11.7px;color:#1c1c1c;transform:scaleX(0.842);transform-origin:0 0">decimal</div>
<svg style="left:624.8px;top:265.25px" width="3" height="5.3" viewBox="0 0 3 5.3"><path d="M0 0 L3 2.65 L0 5.3 Z" fill="#000"/></svg>
<svg style="left:454.15px;top:265.25px" width="3" height="5.3" viewBox="0 0 3 5.3"><path d="M0 0 L3 2.65 L0 5.3 Z" fill="#000"/></svg>
<div class="t tb" style="left:478.4px;top:276px;font-size:11.7px;color:#1c1c1c;transform:scaleX(0.842);transform-origin:0 0">ExtendedAmount</div>
<div class="t tb" style="left:560.8px;top:276px;font-size:11.7px;color:#1c1c1c;transform:scaleX(0.842);transform-origin:0 0">decimal</div>
<svg style="left:624.8px;top:278.35px" width="3" height="5.3" viewBox="0 0 3 5.3"><path d="M0 0 L3 2.65 L0 5.3 Z" fill="#000"/></svg>
<svg style="left:454.15px;top:278.35px" width="3" height="5.3" viewBox="0 0 3 5.3"><path d="M0 0 L3 2.65 L0 5.3 Z" fill="#000"/></svg>
<div class="t tb" style="left:478.4px;top:289.1px;font-size:11.7px;color:#1c1c1c;transform:scaleX(0.842);transform-origin:0 0">UnitPriceDisco...</div>
<div class="t tb" style="left:560.8px;top:289.1px;font-size:11.7px;color:#1c1c1c;transform:scaleX(0.842);transform-origin:0 0">double</div>
<svg style="left:624.8px;top:291.45px" width="3" height="5.3" viewBox="0 0 3 5.3"><path d="M0 0 L3 2.65 L0 5.3 Z" fill="#000"/></svg>
<svg style="left:454.15px;top:291.45px" width="3" height="5.3" viewBox="0 0 3 5.3"><path d="M0 0 L3 2.65 L0 5.3 Z" fill="#000"/></svg>
<div class="t tb" style="left:478.4px;top:302.2px;font-size:11.7px;color:#1c1c1c;transform:scaleX(0.842);transform-origin:0 0">DiscountAmount</div>
<div class="t tb" style="left:560.8px;top:302.2px;font-size:11.7px;color:#1c1c1c;transform:scaleX(0.842);transform-origin:0 0">double</div>
<svg style="left:624.8px;top:304.55px" width="3" height="5.3" viewBox="0 0 3 5.3"><path d="M0 0 L3 2.65 L0 5.3 Z" fill="#000"/></svg>
<svg style="left:454.15px;top:304.55px" width="3" height="5.3" viewBox="0 0 3 5.3"><path d="M0 0 L3 2.65 L0 5.3 Z" fill="#000"/></svg>
<div class="t tb" style="left:478.4px;top:315.3px;font-size:11.7px;color:#1c1c1c;transform:scaleX(0.842);transform-origin:0 0">ProductStanda...</div>
<div class="t tb" style="left:560.8px;top:315.3px;font-size:11.7px;color:#1c1c1c;transform:scaleX(0.842);transform-origin:0 0">decimal</div>
<svg style="left:624.8px;top:317.65px" width="3" height="5.3" viewBox="0 0 3 5.3"><path d="M0 0 L3 2.65 L0 5.3 Z" fill="#000"/></svg>
<svg style="left:454.15px;top:317.65px" width="3" height="5.3" viewBox="0 0 3 5.3"><path d="M0 0 L3 2.65 L0 5.3 Z" fill="#000"/></svg>
<div class="t tb" style="left:478.4px;top:328.4px;font-size:11.7px;color:#1c1c1c;transform:scaleX(0.842);transform-origin:0 0">TotalProductC...</div>
<div class="t tb" style="left:560.8px;top:328.4px;font-size:11.7px;color:#1c1c1c;transform:scaleX(0.842);transform-origin:0 0">decimal</div>
<svg style="left:624.8px;top:330.75px" width="3" height="5.3" viewBox="0 0 3 5.3"><path d="M0 0 L3 2.65 L0 5.3 Z" fill="#000"/></svg>
<svg style="left:454.15px;top:330.75px" width="3" height="5.3" viewBox="0 0 3 5.3"><path d="M0 0 L3 2.65 L0 5.3 Z" fill="#000"/></svg>
<div class="t tb" style="left:478.4px;top:341.5px;font-size:11.7px;color:#1c1c1c;transform:scaleX(0.842);transform-origin:0 0">SalesAmount</div>
<div class="t tb" style="left:560.8px;top:341.5px;font-size:11.7px;color:#1c1c1c;transform:scaleX(0.842);transform-origin:0 0">decimal</div>
<svg style="left:624.8px;top:343.85px" width="3" height="5.3" viewBox="0 0 3 5.3"><path d="M0 0 L3 2.65 L0 5.3 Z" fill="#000"/></svg>
<svg style="left:454.15px;top:343.85px" width="3" height="5.3" viewBox="0 0 3 5.3"><path d="M0 0 L3 2.65 L0 5.3 Z" fill="#000"/></svg>
<div class="t tb" style="left:478.4px;top:354.61px;font-size:11.7px;color:#1c1c1c;transform:scaleX(0.842);transform-origin:0 0">TaxAmt</div>
<div class="t tb" style="left:560.8px;top:354.61px;font-size:11.7px;color:#1c1c1c;transform:scaleX(0.842);transform-origin:0 0">decimal</div>
<svg style="left:624.8px;top:356.95px" width="3" height="5.3" viewBox="0 0 3 5.3"><path d="M0 0 L3 2.65 L0 5.3 Z" fill="#000"/></svg>
<svg style="left:454.15px;top:356.95px" width="3" height="5.3" viewBox="0 0 3 5.3"><path d="M0 0 L3 2.65 L0 5.3 Z" fill="#000"/></svg>
<div class="t tb" style="left:478.4px;top:367.7px;font-size:11.7px;color:#1c1c1c;transform:scaleX(0.842);transform-origin:0 0">Freight</div>
<div class="t tb" style="left:560.8px;top:367.7px;font-size:11.7px;color:#1c1c1c;transform:scaleX(0.842);transform-origin:0 0">decimal</div>
<svg style="left:624.8px;top:370.05px" width="3" height="5.3" viewBox="0 0 3 5.3"><path d="M0 0 L3 2.65 L0 5.3 Z" fill="#000"/></svg>
<svg style="left:454.15px;top:370.05px" width="3" height="5.3" viewBox="0 0 3 5.3"><path d="M0 0 L3 2.65 L0 5.3 Z" fill="#000"/></svg>
<div class="t tb" style="left:478.4px;top:380.8px;font-size:11.7px;color:#1c1c1c;transform:scaleX(0.842);transform-origin:0 0">OrderDate</div>
<div class="t tb" style="left:560.8px;top:380.8px;font-size:11.7px;color:#1c1c1c;transform:scaleX(0.842);transform-origin:0 0">date/time</div>
<svg style="left:624.8px;top:383.15px" width="3" height="5.3" viewBox="0 0 3 5.3"><path d="M0 0 L3 2.65 L0 5.3 Z" fill="#000"/></svg>
<svg style="left:454.15px;top:383.15px" width="3" height="5.3" viewBox="0 0 3 5.3"><path d="M0 0 L3 2.65 L0 5.3 Z" fill="#000"/></svg>
<div class="t tb" style="left:478.4px;top:393.9px;font-size:11.7px;color:#1c1c1c;transform:scaleX(0.842);transform-origin:0 0">DueDate</div>
<div class="t tb" style="left:560.8px;top:393.9px;font-size:11.7px;color:#1c1c1c;transform:scaleX(0.842);transform-origin:0 0">date/time</div>
<svg style="left:624.8px;top:396.25px" width="3" height="5.3" viewBox="0 0 3 5.3"><path d="M0 0 L3 2.65 L0 5.3 Z" fill="#000"/></svg>
<svg style="left:454.15px;top:396.25px" width="3" height="5.3" viewBox="0 0 3 5.3"><path d="M0 0 L3 2.65 L0 5.3 Z" fill="#000"/></svg>
<div class="t tb" style="left:478.4px;top:407px;font-size:11.7px;color:#1c1c1c;transform:scaleX(0.842);transform-origin:0 0">ShipDate</div>
<div class="t tb" style="left:560.8px;top:407px;font-size:11.7px;color:#1c1c1c;transform:scaleX(0.842);transform-origin:0 0">date/time</div>
<svg style="left:624.8px;top:409.35px" width="3" height="5.3" viewBox="0 0 3 5.3"><path d="M0 0 L3 2.65 L0 5.3 Z" fill="#000"/></svg>
<svg style="left:454.15px;top:409.35px" width="3" height="5.3" viewBox="0 0 3 5.3"><path d="M0 0 L3 2.65 L0 5.3 Z" fill="#000"/></svg>
<div class="a" style="left:461.4px;top:434.7px;width:158.4px;height:15.5px;background:#f8f8f8;"></div>
<div class="a" style="left:461.4px;top:434.7px;width:15.8px;height:15.5px;background:#f1f1f1;box-sizing:border-box;border:1px solid #c2c2c2;box-shadow:inset 1px 1px 0 #fbfbfb;"></div>
<svg style="left:466.8px;top:438.95px" width="4" height="7" viewBox="0 0 4 7"><path d="M4 0 L0 3.5 L4 7 Z" fill="#000"/></svg>
<div class="a" style="left:477.2px;top:434.7px;width:100.8px;height:15.5px;background:#f1f1f1;box-sizing:border-box;border:1px solid #c2c2c2;box-shadow:inset 1px 1px 0 #fbfbfb;"></div>
<div class="a" style="left:604px;top:434.7px;width:15.8px;height:15.5px;background:#f1f1f1;box-sizing:border-box;border:1px solid #c2c2c2;box-shadow:inset 1px 1px 0 #fbfbfb;"></div>
<svg style="left:610.4px;top:438.95px" width="4" height="7" viewBox="0 0 4 7"><path d="M0 0 L4 3.5 L0 7 Z" fill="#000"/></svg>
<div class="a" style="left:449.3px;top:436.3px;width:11.1px;height:1px;background:#c4c4c4;"></div>
<div class="a" style="left:620.8px;top:436.3px;width:11.4px;height:1px;background:#c4c4c4;"></div>
<svg style="left:446px;top:121px" width="32" height="33" viewBox="0 0 32 33"><defs><linearGradient id="t2g" x1="0" y1="0" x2="1" y2="1"><stop offset="0" stop-color="#f4f6ff"/><stop offset="0.6" stop-color="#dfe9fb"/><stop offset="1" stop-color="#c2d4f6"/></linearGradient></defs><path d="M11.5 8.6 L21.6 5.4 L25.5 9.4 L26.3 24.8 L12.6 29.5 Z" fill="url(#t2g)" stroke="#b9b9f4" stroke-width="0.9" stroke-linejoin="round"/><path d="M11.5 8.6 L12.6 29.5" stroke="#a9a9f6" stroke-width="1.6"/><path d="M21.6 5.4 L21.9 9.9 L25.5 9.4" fill="#cfd4fb" stroke="#a6a6ee" stroke-width="0.6"/><text x="15" y="23.3" transform="rotate(-14 15 23.3)" font-family="Liberation Sans, sans-serif" font-weight="bold" font-style="italic" font-size="8.8" fill="#0e5fc0" letter-spacing="-0.4">SQ</text></svg>
<div class="a" style="left:687.3px;top:125px;width:198.3px;height:326.8px;background:repeating-linear-gradient(135deg,#5a5a5a 0,#5a5a5a 0.75px,#fff 0.75px,#fff 2.83px);"></div>
<div class="a" style="left:690.3px;top:127.7px;width:192.3px;height:321.3px;background:#f0f0f0;"></div>
<div class="a" style="left:702px;top:170.1px;width:168.5px;height:262.1px;background:#fff;"></div>
<div class="a" style="left:690.3px;top:127.7px;width:192.3px;height:27.8px;background:linear-gradient(90deg,#941a1a 0%,#9c2424 40%,#b25252 75%,#c68282 100%);"></div>
<div class="t tb" style="left:721px;top:126.71px;font-size:11.7px;color:#0c0c0c;transform:scaleX(0.842);transform-origin:0 0">SRT_FactInternetSales</div>
<div class="t tb" style="left:721px;top:138.5px;font-size:11.7px;color:#0c0c0c;transform:scaleX(0.842);transform-origin:0 0">Sorter</div>
<div class="a" style="left:857px;top:129px;width:10.8px;height:9.5px;background:#f8f8f8;box-sizing:border-box;border:1px solid #505050;box-shadow:inset 1px 1px 0 #fff;"></div>
<div class="a" style="left:870.2px;top:129px;width:10.8px;height:9.5px;background:#f8f8f8;box-sizing:border-box;border:1px solid #505050;box-shadow:inset 1px 1px 0 #fff;"></div>
<div class="t" style="left:860.4px;top:129.8px;font-size:8px;color:#111">?</div>
<div class="a" style="left:873.2px;top:134px;width:5.2px;height:1.8px;background:#000;"></div>
<div class="a" style="left:690.3px;top:155.5px;width:11.7px;height:14.6px;background:#f0f0f0;box-sizing:border-box;border-top:1px solid #fff;border-left:1px solid #fff;border-right:1px solid #a0a0a0;border-bottom:1px solid #a0a0a0;"></div>
<div class="a" style="left:870.5px;top:155.5px;width:12.1px;height:14.6px;background:#f0f0f0;box-sizing:border-box;border-top:1px solid #fff;border-left:1px solid #fff;border-right:1px solid #a0a0a0;border-bottom:1px solid #a0a0a0;"></div>
<div class="a" style="left:702px;top:155.5px;width:94.2px;height:14.6px;background:#f1f1f1;box-sizing:border-box;border-top:1px solid #fff;border-left:1px solid #fff;border-right:1px solid #9a9a9a;border-bottom:1px solid #9a9a9a;"></div>
<div class="t tb" style="left:708.4px;top:158.5px;font-size:11.7px;color:#222;transform:scaleX(0.842);transform-origin:0 0">Name</div>
<div class="a" style="left:796.2px;top:155.5px;width:28.4px;height:14.6px;background:#f1f1f1;box-sizing:border-box;border-top:1px solid #fff;border-left:1px solid #fff;border-right:1px solid #9a9a9a;border-bottom:1px solid #9a9a9a;"></div>
<div class="t tb" style="left:802px;top:158.5px;font-size:11.7px;color:#222;transform:scaleX(0.842);transform-origin:0 0">Key</div>
<div class="a" style="left:824.6px;top:155.5px;width:45.9px;height:14.6px;background:#f1f1f1;box-sizing:border-box;border-top:1px solid #fff;border-left:1px solid #fff;border-right:1px solid #9a9a9a;border-bottom:1px solid #9a9a9a;"></div>
<div class="t tb" style="left:830.5px;top:158.5px;font-size:11.7px;color:#222;transform:scaleX(0.842);transform-origin:0 0">Datatype</div>
<div class="a" style="left:690.3px;top:170.1px;width:11.7px;height:278.3px;background:#f0f0f0;"></div>
<div class="a" style="left:870.5px;top:170.1px;width:12.1px;height:278.3px;background:#f0f0f0;"></div>
<div class="a" style="left:701px;top:170.1px;width:1px;height:262.1px;background:#b4b4b4;"></div>
<div class="a" style="left:870.5px;top:170.1px;width:1px;height:262.1px;background:#bdbdbd;"></div>
<div class="a" style="left:702px;top:172.2px;width:168.5px;height:1px;background:#f1f1f1;"></div>
<div class="a" style="left:702px;top:185.4px;width:168.5px;height:1px;background:#f1f1f1;"></div>
<div class="a" style="left:702px;top:198.6px;width:168.5px;height:1px;background:#f1f1f1;"></div>
<div class="a" style="left:702px;top:211.8px;width:168.5px;height:1px;background:#f1f1f1;"></div>
<div class="a" style="left:702px;top:225px;width:168.5px;height:1px;background:#f1f1f1;"></div>
<div class="a" style="left:702px;top:238.2px;width:168.5px;height:1px;background:#f1f1f1;"></div>
<div class="a" style="left:702px;top:251.4px;width:168.5px;height:1px;background:#f1f1f1;"></div>
<div class="a" style="left:702px;top:264.6px;width:168.5px;height:1px;background:#f1f1f1;"></div>
<div class="a" style="left:702px;top:277.8px;width:168.5px;height:1px;background:#f1f1f1;"></div>
<div class="a" style="left:702px;top:291px;width:168.5px;height:1px;background:#f1f1f1;"></div>
<div class="a" style="left:702px;top:304.2px;width:168.5px;height:1px;background:#f1f1f1;"></div>
<div class="a" style="left:702px;top:317.4px;width:168.5px;height:1px;background:#f1f1f1;"></div>
<div class="a" style="left:702px;top:330.6px;width:168.5px;height:1px;background:#f1f1f1;"></div>
<div class="a" style="left:702px;top:343.8px;width:168.5px;height:1px;background:#f1f1f1;"></div>
<div class="a" style="left:702px;top:357px;width:168.5px;height:1px;background:#f1f1f1;"></div>
<div class="a" style="left:702px;top:370.2px;width:168.5px;height:1px;background:#f1f1f1;"></div>
<div class="a" style="left:702px;top:383.4px;width:168.5px;height:1px;background:#f1f1f1;"></div>
<div class="a" style="left:702px;top:396.6px;width:168.5px;height:1px;background:#f1f1f1;"></div>
<div class="a" style="left:702px;top:409.8px;width:168.5px;height:1px;background:#f1f1f1;"></div>
<div class="a" style="left:702px;top:423px;width:168.5px;height:1px;background:#f1f1f1;"></div>
<div class="a" style="left:796.2px;top:172.1px;width:1px;height:260.1px;background:#f1f1f1;"></div>
<div class="a" style="left:824.6px;top:172.1px;width:1px;height:260.1px;background:#f1f1f1;"></div>
<div class="a" style="left:702px;top:432.2px;width:168.5px;height:16.2px;background:#f8f8f8;"></div>
<div class="a" style="left:702px;top:432.2px;width:15.8px;height:16.2px;background:#f1f1f1;box-sizing:border-box;border:1px solid #c2c2c2;box-shadow:inset 1px 1px 0 #fbfbfb;"></div>
<svg style="left:707.4px;top:436.8px" width="4" height="7" viewBox="0 0 4 7"><path d="M4 0 L0 3.5 L4 7 Z" fill="#000"/></svg>
<div class="a" style="left:717.8px;top:432.2px;width:101.4px;height:16.2px;background:#f1f1f1;box-sizing:border-box;border:1px solid #c2c2c2;box-shadow:inset 1px 1px 0 #fbfbfb;"></div>
<div class="a" style="left:854.7px;top:432.2px;width:15.8px;height:16.2px;background:#f1f1f1;box-sizing:border-box;border:1px solid #c2c2c2;box-shadow:inset 1px 1px 0 #fbfbfb;"></div>
<svg style="left:861.1px;top:436.8px" width="4" height="7" viewBox="0 0 4 7"><path d="M0 0 L4 3.5 L0 7 Z" fill="#000"/></svg>
<div class="a" style="left:690.3px;top:433.8px;width:10.7px;height:1px;background:#c4c4c4;"></div>
<div class="a" style="left:871.5px;top:433.8px;width:11.1px;height:1px;background:#c4c4c4;"></div>
<svg style="left:686px;top:124px" width="34" height="33" viewBox="0 0 34 33"><path d="M5.2 13.2 L12 4.8 L19.4 11 L16.2 12.6 L16.6 19.2 L19.3 18 L13 29.8 L5.8 23.6 L8.8 22.3 L8.4 15 Z" fill="#4fb26a" stroke="#3a9a50" stroke-width="0.6" stroke-linejoin="round"/><path d="M6.5 13 L12 6.4 L13.5 7.8 L9.4 13.4 L9.8 22 L7.5 23.2" fill="#8fd88f" opacity="0.8"/><path d="M11.5 14 L14.6 26.5" stroke="#3fb4b0" stroke-width="2.6" opacity="0.6"/><path d="M21.3 8 L30.8 5 L30.9 27.3 L21.6 29.9 Z" fill="#5aa6f0" stroke="#4a93e6" stroke-width="0.6"/><path d="M21.3 8 L23.8 6.4 L24 29 L21.6 29.9 Z" fill="#9ccdfb"/><path d="M26.5 9.5 L26.8 26.5" stroke="#5a5aee" stroke-width="1.6" stroke-dasharray="2 2.4" opacity="0.7"/><path d="M24.5 15.5 L26.5 10.5 L29 14 M24.7 21 L26.8 26 L29.2 21.6" stroke="#bfe0ff" stroke-width="0.9" fill="none"/></svg>
<div class="t" style="left:835.8px;top:262.6px;font-family:'DejaVu Sans',sans-serif;font-weight:bold;font-size:12px;color:#9c1212;transform:scaleX(0.972);transform-origin:0 0">©tutorialgateway.org</div>
</body></html>
